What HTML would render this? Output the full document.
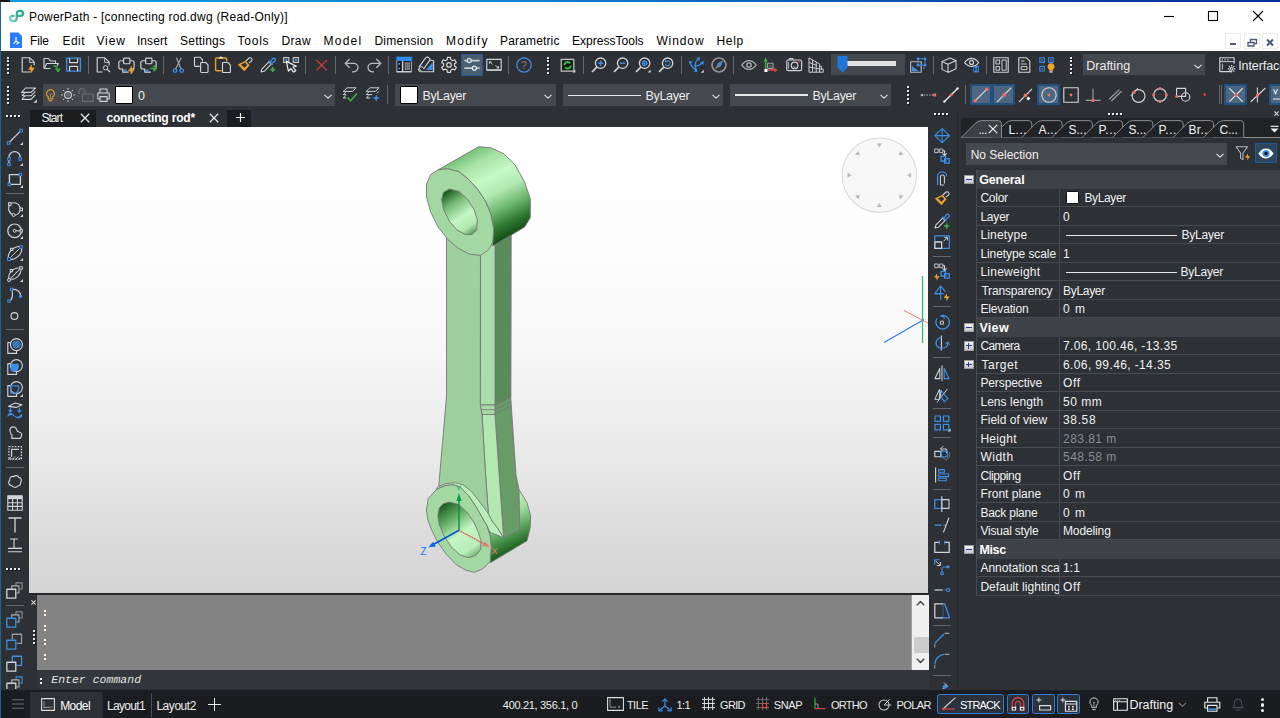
<!DOCTYPE html>
<html lang="en"><head><meta charset="utf-8"><title>PowerPath - [connecting rod.dwg (Read-Only)]</title>
<style>
html,body{margin:0;padding:0;background:#2d3035;}
body{width:1280px;height:718px;overflow:hidden;position:relative;font-family:"Liberation Sans",sans-serif;}
.r{position:absolute;display:block;}
.t{position:absolute;white-space:pre;display:block;}
svg{overflow:visible;}
</style></head>
<body>
<div class="r" style="left:0px;top:0px;width:1280px;height:51px;background:#fff;"></div>
<div class="r" style="left:0px;top:0px;width:1280px;height:1.5px;background:linear-gradient(90deg,#0a9ee0 0%,#0a84d0 40%,#0a3fa8 80%,#0a2e98 100%);"></div>
<div class="r" style="left:0px;top:0px;width:10px;height:1.5px;background:#151515;"></div>
<div class="r" style="left:0px;top:1.5px;width:1.4px;height:716.5px;background:#16688c;"></div>
<svg class="r" style="left:0px;top:0px;" width="32" height="28" viewBox="0 0 32 28"><defs><linearGradient id="lg" gradientUnits="userSpaceOnUse" x1="9" y1="22" x2="24" y2="10"><stop offset="0" stop-color="#8fdccb"/><stop offset="0.5" stop-color="#3bb49a"/><stop offset="1" stop-color="#1ea58a"/></linearGradient></defs>
<path d="M13.6 15.9C11.5 15.4 10.1 16.7 10.1 18.5C10.1 20.3 11.6 21.2 13.3 21.2C15.3 21.2 16.8 19.8 16.8 17.8V13.5C16.8 11.8 18.2 10.9 20 10.9C21.8 10.9 23 11.9 23 13.4C23 14.9 21.8 15.8 20.2 15.8H17.6" fill="none" stroke="url(#lg)" stroke-width="2.3" stroke-linecap="round"/></svg>
<span class="t" style="left:28.90px;top:11.24px;font-size:12px;line-height:12px;color:#000;letter-spacing:0.231px;">PowerPath - [connecting rod.dwg (Read-Only)]</span>
<svg class="r" style="left:1160px;top:8px;" width="110" height="16" viewBox="0 0 110 16"><path d="M4 8.5h10" stroke="#000" stroke-width="1.1"/><rect x="48.5" y="3.5" width="9" height="9" fill="none" stroke="#000" stroke-width="1.1"/><path d="M93 3l10 10M103 3l-10 10" stroke="#000" stroke-width="1.1"/></svg>
<svg class="r" style="left:10px;top:32px;" width="12" height="16" viewBox="0 0 12 16"><path d="M0 0.5h8.5l3.5 3.5v12H0z" fill="#2b7bff"/><path d="M6 5v4.2M6 9.2l-2.6 2.6M6 9.2l2.6 1.4l-2 1.6" stroke="#fff" stroke-width="1.2" fill="none"/></svg>
<span class="t" style="left:30.00px;top:35.34px;font-size:12px;line-height:12px;color:#000;letter-spacing:-0.145px;">File</span>
<span class="t" style="left:62.40px;top:35.34px;font-size:12px;line-height:12px;color:#000;letter-spacing:0.507px;">Edit</span>
<span class="t" style="left:96.40px;top:35.34px;font-size:12px;line-height:12px;color:#000;letter-spacing:0.902px;">View</span>
<span class="t" style="left:136.90px;top:35.34px;font-size:12px;line-height:12px;color:#000;letter-spacing:0.098px;">Insert</span>
<span class="t" style="left:180.10px;top:35.34px;font-size:12px;line-height:12px;color:#000;letter-spacing:0.206px;">Settings</span>
<span class="t" style="left:237.60px;top:35.34px;font-size:12px;line-height:12px;color:#000;letter-spacing:0.747px;">Tools</span>
<span class="t" style="left:281.40px;top:35.34px;font-size:12px;line-height:12px;color:#000;letter-spacing:0.399px;">Draw</span>
<span class="t" style="left:323.60px;top:35.34px;font-size:12px;line-height:12px;color:#000;letter-spacing:1.229px;">Model</span>
<span class="t" style="left:374.40px;top:35.34px;font-size:12px;line-height:12px;color:#000;letter-spacing:0.264px;">Dimension</span>
<span class="t" style="left:446.10px;top:35.34px;font-size:12px;line-height:12px;color:#000;letter-spacing:1.191px;">Modify</span>
<span class="t" style="left:500.10px;top:35.34px;font-size:12px;line-height:12px;color:#000;letter-spacing:0.143px;">Parametric</span>
<span class="t" style="left:571.90px;top:35.34px;font-size:12px;line-height:12px;color:#000;letter-spacing:0.031px;">ExpressTools</span>
<span class="t" style="left:656.40px;top:35.34px;font-size:12px;line-height:12px;color:#000;letter-spacing:0.904px;">Window</span>
<span class="t" style="left:716.40px;top:35.34px;font-size:12px;line-height:12px;color:#000;letter-spacing:0.707px;">Help</span>
<div class="r" style="left:1225px;top:33px;width:16px;height:16px;background:#fff;border:1px solid #ececec;box-sizing:border-box;"></div>
<div class="r" style="left:1244px;top:33px;width:16px;height:16px;background:#fff;border:1px solid #ececec;box-sizing:border-box;"></div>
<div class="r" style="left:1262px;top:33px;width:16px;height:16px;background:#fff;border:1px solid #ececec;box-sizing:border-box;"></div>
<svg class="r" style="left:1225px;top:33px;" width="54" height="16" viewBox="0 0 54 16"><path d="M5 11h6" stroke="#4a5a78" stroke-width="2"/>
<path d="M23 9.5h6v3.5h-6z M25.5 9V6.5h6v4H29" fill="none" stroke="#4a5a78" stroke-width="1.3"/>
<path d="M42 6.5l6 6M48 6.5l-6 6" stroke="#4a5a78" stroke-width="2"/></svg>
<div class="r" style="left:29px;top:126.5px;width:899px;height:466px;background:linear-gradient(180deg,#ffffff 0%,#fdfdfd 28%,#f7f7f7 48%,#ececec 66%,#dedede 85%,#d3d3d3 100%);"></div>
<svg class="r" style="left:0;top:0" width="1280" height="718" viewBox="0 0 1280 718"><defs>
<linearGradient id="cs1" gradientUnits="userSpaceOnUse" x1="478" y1="150" x2="520" y2="232"><stop offset="0" stop-color="#7ec67e"/><stop offset="0.12" stop-color="#a6e2a6"/><stop offset="0.32" stop-color="#c5f9c5"/><stop offset="0.5" stop-color="#b2eab2"/><stop offset="0.68" stop-color="#6fb870"/><stop offset="0.85" stop-color="#2f7a31"/><stop offset="1" stop-color="#0f4a12"/></linearGradient>
<linearGradient id="cs2" gradientUnits="userSpaceOnUse" x1="488" y1="474" x2="526" y2="552"><stop offset="0" stop-color="#86cc86"/><stop offset="0.15" stop-color="#aee6ae"/><stop offset="0.35" stop-color="#c2f6c2"/><stop offset="0.52" stop-color="#a2dea2"/><stop offset="0.7" stop-color="#5ea860"/><stop offset="0.86" stop-color="#2a722c"/><stop offset="1" stop-color="#0f4612"/></linearGradient>
<linearGradient id="h1" gradientUnits="userSpaceOnUse" x1="447" y1="192" x2="474" y2="232"><stop offset="0" stop-color="#1f5d22"/><stop offset="0.25" stop-color="#6fb570"/><stop offset="0.6" stop-color="#c4f7c4"/><stop offset="0.85" stop-color="#b2e8b2"/><stop offset="1" stop-color="#5ea05f"/></linearGradient>
<linearGradient id="h2" gradientUnits="userSpaceOnUse" x1="443" y1="505" x2="478" y2="555"><stop offset="0" stop-color="#1f5d22"/><stop offset="0.25" stop-color="#5ea860"/><stop offset="0.55" stop-color="#c4f7c4"/><stop offset="0.85" stop-color="#b8ecb8"/><stop offset="1" stop-color="#6aac6b"/></linearGradient>
</defs><polygon points="470.0,484.0 519.0,489.6 527.0,502.8 530.7,516.0 530.2,527.7 527.0,540.8 490.2,562.8 491.2,546.7 490.2,536.4 486.8,525.5 481.7,516.7 475.8,506.5" fill="url(#cs2)" stroke="#777" stroke-width="0.9" stroke-linejoin="round"/><polygon points="495.0,236.0 511.0,227.0 510.7,397.0 516.0,475.0 519.0,489.6 519.7,530.0 503.6,538.0 499.2,475.0 495.0,414.0 495.0,405.0" fill="#679b67" stroke="#777" stroke-width="0.9" stroke-linejoin="round"/><polygon points="495.0,236.0 511.0,227.0 510.7,397.0 495.0,405.0" fill="#5a8c5b" stroke="#777" stroke-width="0.9" stroke-linejoin="round"/><path d="M495 405L510.7 397M495 409.5L510.7 401.5M495 414L510.7 406" fill="none" stroke="#777" stroke-width="0.8"/><polygon points="480.5,250.0 495.0,240.0 495.0,405.0 480.3,405.0" fill="#abdfaa" stroke="#777" stroke-width="0.9" stroke-linejoin="round"/><polygon points="480.3,405.0 495.0,405.0 495.0,414.5 482.0,414.5" fill="#a6dba5" stroke="#777" stroke-width="0.9" stroke-linejoin="round"/><path d="M480.5 409.7H495" stroke="#777" stroke-width="0.8"/><polygon points="482.0,414.5 495.0,414.5 499.2,475.0 503.6,538.0 497.5,528.0 492.0,521.0 488.3,513.5 485.6,475.0" fill="#b3e8b2" stroke="#777" stroke-width="0.9" stroke-linejoin="round"/><polygon points="446.5,236.0 480.5,252.0 480.3,405.0 482.0,414.5 485.6,475.0 488.3,513.5 470.0,520.0 438.7,487.0 446.6,395.0" fill="#9dd09c" stroke="#777" stroke-width="0.9" stroke-linejoin="round"/><polygon points="437.0,487.5 446.0,483.5 455.5,482.8 463.5,485.0 472.5,492.5 481.0,503.5 488.3,513.5 492.0,521.0 497.5,528.0 503.6,538.0 496.0,534.5 490.0,532.5 486.8,525.5 481.7,516.7 475.8,506.5 468.5,495.5 460.5,487.4 453.9,484.9 445.1,485.5 436.3,489.6" fill="#b9eeb9" stroke="#777" stroke-width="0.9" stroke-linejoin="round"/><polygon points="438.2,169.8 478.6,146.7 490.8,147.8 504.0,153.8 515.2,165.1 524.6,182.0 530.3,198.9 530.3,217.7 524.6,227.1 492.7,245.9 493.6,229.0 490.8,213.9 485.2,200.8 477.7,189.5 468.3,179.2 458.9,171.6 447.6,168.8" fill="url(#cs1)" stroke="#777" stroke-width="0.9" stroke-linejoin="round"/><polygon points="447.6,168.8 458.9,171.6 468.3,179.2 477.7,189.5 485.2,200.8 490.8,213.9 493.6,229.0 492.7,242.1 488.9,249.6 480.5,255.3 470.1,254.3 458.9,248.7 447.6,239.3 438.2,227.1 430.7,212.1 426.5,197.0 426.5,183.9 430.7,174.5 438.2,169.8" fill="#a3d8a2" stroke="#777" stroke-width="0.9" stroke-linejoin="round"/><polygon points="449.5,189.1 458.9,191.4 467.3,198.9 473.9,209.2 477.3,219.6 476.7,229.9 472.0,234.6 465.4,234.6 457.0,229.9 449.5,221.4 443.8,210.2 441.6,199.8 443.5,192.3" fill="url(#h1)" stroke="#777" stroke-width="0.9" stroke-linejoin="round"/><polygon points="453.9,484.9 460.5,487.4 468.5,495.5 475.8,506.5 481.7,516.7 486.8,525.5 490.2,536.4 491.2,546.7 490.2,561.3 483.1,568.6 474.4,572.3 465.6,570.1 456.8,565.0 446.6,554.7 437.8,542.3 431.2,529.1 427.6,518.9 426.4,510.1 428.3,498.4 436.3,489.6 445.1,485.5" fill="#a3d8a2" stroke="#777" stroke-width="0.9" stroke-linejoin="round"/><polygon points="449.5,502.1 458.3,504.3 467.1,512.3 473.6,521.8 478.0,531.3 481.0,540.8 480.7,549.6 475.8,555.5 468.5,557.7 459.7,554.7 451.0,546.7 443.6,535.0 439.3,524.7 437.8,516.0 439.3,507.9 443.6,503.5" fill="url(#h2)" stroke="#777" stroke-width="0.9" stroke-linejoin="round"/><path d="M459 530.3V497" stroke="#0a8a4a" stroke-width="1.4"/><path d="M459 493l-2.6 8h5.2z" fill="#0a9a50"/><path d="M459 530.3L487 545.5" stroke="#e05a5a" stroke-width="1.4" stroke-dasharray="1.5 0.6"/><path d="M490 547l-7.6-1.2l2.4-4.4z" fill="#f07070"/><path d="M459 530.3L432.5 545" stroke="#0a50d8" stroke-width="1.6"/><path d="M428.5 547.2l4.5-5.4l3 4.6z" fill="#0a6af0"/><text x="456" y="491" font-size="8" fill="#18b070" font-family="Liberation Sans,sans-serif">Y</text><text x="491.5" y="554" font-size="9" fill="#e87a6a" font-family="Liberation Sans,sans-serif">X</text><text x="420.5" y="554.5" font-size="10" fill="#1a7af0" font-family="Liberation Sans,sans-serif">Z</text><circle cx="879.3" cy="175.2" r="37.2" fill="rgba(0,0,0,0.028)" stroke="#dadada" stroke-width="1.1"/><path d="M-2.6 -1.8H2.6L0 2.2Z" fill="#b8b8b8" transform="translate(879.3,145.2) rotate(0)"/><path d="M-2.6 -1.8H2.6L0 2.2Z" fill="#b8b8b8" transform="translate(900.5,154.0) rotate(45)"/><path d="M-2.6 -1.8H2.6L0 2.2Z" fill="#b8b8b8" transform="translate(909.3,175.2) rotate(90)"/><path d="M-2.6 -1.8H2.6L0 2.2Z" fill="#b8b8b8" transform="translate(900.5,196.4) rotate(135)"/><path d="M-2.6 -1.8H2.6L0 2.2Z" fill="#b8b8b8" transform="translate(879.3,205.2) rotate(180)"/><path d="M-2.6 -1.8H2.6L0 2.2Z" fill="#b8b8b8" transform="translate(858.1,196.4) rotate(225)"/><path d="M-2.6 -1.8H2.6L0 2.2Z" fill="#b8b8b8" transform="translate(849.3,175.2) rotate(270)"/><path d="M-2.6 -1.8H2.6L0 2.2Z" fill="#b8b8b8" transform="translate(858.1,154.0) rotate(315)"/><path d="M922.5 276V343" stroke="#20c060" stroke-width="1.2"/><path d="M884 342.5L924 319.5" stroke="#2a7ae8" stroke-width="1.2"/><path d="M904 310.5L928 323" stroke="#f06a6a" stroke-width="0.9"/></svg>
<div class="r" style="left:7px;top:56.5px;width:2px;height:2px;background:#e4e4e4;box-shadow:1px 1px 0 #17191c;"></div><div class="r" style="left:7px;top:60.4px;width:2px;height:2px;background:#e4e4e4;box-shadow:1px 1px 0 #17191c;"></div><div class="r" style="left:7px;top:64.3px;width:2px;height:2px;background:#e4e4e4;box-shadow:1px 1px 0 #17191c;"></div><div class="r" style="left:7px;top:68.2px;width:2px;height:2px;background:#e4e4e4;box-shadow:1px 1px 0 #17191c;"></div><div class="r" style="left:7px;top:72.1px;width:2px;height:2px;background:#e4e4e4;box-shadow:1px 1px 0 #17191c;"></div>
<svg class="r" style="left:21px;top:57px;" width="16" height="16" viewBox="0 0 16 16"><path d="M9.5 15H1.2V0.8h7.6l4.4 4.4v3" fill="none" stroke="#d2d4d8" stroke-width="1.14" stroke-linejoin="round"/><path d="M8.6 1v4.4h4.4" fill="none" stroke="#d2d4d8" stroke-width="0.88" stroke-linejoin="round"/><path d="M7.5 12.5l3-4.6l0.2 3.2l2.6-0.2l-3.2 4.8l-0.2-3.2z" fill="#eaa22f" stroke="#eaa22f" stroke-width="0.6"/></svg>
<svg class="r" style="left:43px;top:57px;" width="16" height="16" viewBox="0 0 16 16"><path d="M1 11.5V1.5h4.5l2 2.5h5v2.5" fill="none" stroke="#d2d4d8" stroke-width="1.14" stroke-linejoin="round"/><path d="M1.2 11.5l2.5-5h11.6l-1.2 2.4M1 11.5h6.5" fill="none" stroke="#d2d4d8" stroke-width="1.14" stroke-linejoin="round"/><path d="M10.5 9c3 0 4.5 1.5 4.5 5M12.4 11.6l2.6 3l2.4-3" fill="none" stroke="#3cb043" stroke-width="1.32" stroke-linejoin="round"/></svg>
<svg class="r" style="left:65.5px;top:57px;" width="16" height="16" viewBox="0 0 16 16"><path d="M0.8 1.2h13.6v13H0.8z" fill="none" stroke="#3d8ee6" stroke-width="1.32" stroke-linejoin="round"/><path d="M3.6 1.2v4.4h8V1.2M3.6 14v-4.6h8V14" fill="none" stroke="#d2d4d8" stroke-width="1.14" stroke-linejoin="round"/></svg>
<div class="r" style="left:88px;top:56px;width:1px;height:18px;background:#63666b;"></div>
<svg class="r" style="left:96px;top:57px;" width="16" height="16" viewBox="0 0 16 16"><path d="M6.5 15H1.2V0.8h7.6l4.4 4.4v3" fill="none" stroke="#d2d4d8" stroke-width="1.14" stroke-linejoin="round"/><path d="M8.6 1v4.4h4.4" fill="none" stroke="#d2d4d8" stroke-width="0.88" stroke-linejoin="round"/><circle cx="9.6" cy="10.8" r="2.2" fill="none" stroke="#d2d4d8" stroke-width="0.97" stroke-linejoin="round"/><path d="M11.2 12.4l2.8 2.6" fill="none" stroke="#d2d4d8" stroke-width="1.23" stroke-linejoin="round"/></svg>
<svg class="r" style="left:117.5px;top:57px;" width="16" height="16" viewBox="0 0 16 16"><rect x="5.6" y="1.1" width="6.3" height="5.7" rx="0.8" fill="none" stroke="#d2d4d8" stroke-width="1.14" stroke-linejoin="round"/><path d="M5.6 3.8H2.8a2 2 0 0 0-2 2v4.2a2 2 0 0 0 2 2h1.9M11.9 3.8h2.2a2 2 0 0 1 2 2v4.2a2 2 0 0 1-2 2h-1M4.7 11.4v3.7h6" fill="none" stroke="#d2d4d8" stroke-width="1.14" stroke-linejoin="round"/><path d="M5.4 12.4h3.2v2.2H5.4z" fill="#3d8ee6"/><path d="M10.4 14l3-4.6l0.2 3.2l2.6-0.2l-3.2 4.8l-0.2-3.2z" fill="#eaa22f" stroke="#eaa22f" stroke-width="0.6"/></svg>
<svg class="r" style="left:139.5px;top:57px;" width="16" height="16" viewBox="0 0 16 16"><rect x="5.6" y="1.1" width="6.3" height="5.7" rx="0.8" fill="none" stroke="#d2d4d8" stroke-width="1.14" stroke-linejoin="round"/><path d="M5.6 3.8H2.8a2 2 0 0 0-2 2v4.2a2 2 0 0 0 2 2h1.9M11.9 3.8h2.2a2 2 0 0 1 2 2v4.2a2 2 0 0 1-2 2h-1M4.7 11.4v3.7h6" fill="none" stroke="#d2d4d8" stroke-width="1.14" stroke-linejoin="round"/><path d="M5.4 12.4h3.2v2.2H5.4z" fill="#3d8ee6"/><path d="M10 11.4h6M13.4 8.6l3 2.8l-3 2.8" fill="none" stroke="#3cb043" stroke-width="1.41" stroke-linejoin="round"/></svg>
<div class="r" style="left:162.5px;top:56px;width:1px;height:18px;background:#63666b;"></div>
<svg class="r" style="left:171px;top:57px;" width="16" height="16" viewBox="0 0 16 16"><path d="M5.5 0.7l4.5 11.3M10.3 0.7l-5.7 11.3" fill="none" stroke="#a8abb0" stroke-width="1.14" stroke-linejoin="round"/><circle cx="4.1" cy="13.6" r="1.8" fill="none" stroke="#3d8ee6" stroke-width="1.32" stroke-linejoin="round"/><circle cx="10.6" cy="13.6" r="1.8" fill="none" stroke="#3d8ee6" stroke-width="1.32" stroke-linejoin="round"/></svg>
<svg class="r" style="left:193.5px;top:57px;" width="16" height="16" viewBox="0 0 16 16"><path d="M5.8 9.4H1.4a0.9 0.9 0 0 1-0.9-0.9V1.1a0.9 0.9 0 0 1 0.9-0.9h4.6l2.4 2.4v1.8" fill="none" stroke="#d2d4d8" stroke-width="1.14" stroke-linejoin="round"/><path d="M7.5 5.5h4.2L14 7.8v6.8a0.9 0.9 0 0 1-0.9 0.9H7.5a0.9 0.9 0 0 1-0.9-0.9V6.4a0.9 0.9 0 0 1 0.9-0.9z" fill="none" stroke="#d2d4d8" stroke-width="1.14" stroke-linejoin="round"/></svg>
<svg class="r" style="left:214.5px;top:57px;" width="16" height="16" viewBox="0 0 16 16"><path d="M6.4 13.8H1.6a1 1 0 0 1-1-1V2a1 1 0 0 1 1-1h9a1 1 0 0 1 1 1v2.6" fill="none" stroke="#eaa22f" stroke-width="1.41" stroke-linejoin="round"/><path d="M4 1.6a2 2 0 0 1 4 0z" fill="#e8e8e8"/><path d="M8.4 5.5h4.4l2.6 2.6v6.5a0.9 0.9 0 0 1-0.9 0.9H8.4a0.9 0.9 0 0 1-0.9-0.9V6.4a0.9 0.9 0 0 1 0.9-0.9z" fill="none" stroke="#d2d4d8" stroke-width="1.14" stroke-linejoin="round"/></svg>
<svg class="r" style="left:237px;top:57px;" width="16" height="16" viewBox="0 0 16 16"><path d="M0.8 7.4l7.8-3.6l4 4.4l-5.2 6z" fill="#eaa22f"/><path d="M4 7.4l4-1.8l2.2 2.4l-2.8 2.8z" fill="#2d3035"/><path d="M8.8 4l3.4-3a1.4 1.4 0 0 1 2 0.2l0.6 0.8a1.4 1.4 0 0 1-0.2 1.9L12 6.2" fill="none" stroke="#d2d4d8" stroke-width="1.06" stroke-linejoin="round"/></svg>
<svg class="r" style="left:260px;top:57px;" width="16" height="16" viewBox="0 0 16 16"><path d="M1 15l1-3.2l7-7l2.4 2.4l-7 7z" fill="none" stroke="#d2d4d8" stroke-width="1.06" stroke-linejoin="round"/><path d="M8.4 3.6l4.2 4.2M10 5.4l2.6-3.6a1.6 1.6 0 0 1 2.4 2.2l-3.4 2.8" fill="none" stroke="#3d8ee6" stroke-width="1.32" stroke-linejoin="round"/><path d="M10.2 12.6h5M12.7 10.1v5" fill="none" stroke="#3cb043" stroke-width="1.58" stroke-linejoin="round"/></svg>
<svg class="r" style="left:282.5px;top:57px;" width="16" height="16" viewBox="0 0 16 16"><rect x="0.6" y="0.6" width="5.2" height="4.8" fill="none" stroke="#c8c8c8" stroke-width="1.06" stroke-linejoin="round"/><rect x="2.2" y="2" width="2" height="2" fill="#3d8ee6"/><rect x="10.2" y="0.6" width="5.2" height="4.8" fill="none" stroke="#c8c8c8" stroke-width="1.06" stroke-linejoin="round"/><rect x="11.8" y="2" width="2" height="2" fill="#3d8ee6"/><path d="M3.4 4.4l2 9.8l2.4-2.6l2.8 3.6l2.2-1.6l-2.8-3.6l3.4-0.8z" fill="#2d3035" stroke="#f0f0f0" stroke-width="1.2" stroke-linejoin="round"/></svg>
<div class="r" style="left:305px;top:56px;width:1px;height:18px;background:#63666b;"></div>
<svg class="r" style="left:313.5px;top:57px;" width="16" height="16" viewBox="0 0 16 16"><path d="M2.4 3l10.6 10.4M13 3L2.4 13.4" fill="none" stroke="#d63c3c" stroke-width="1.32" stroke-linejoin="round"/></svg>
<div class="r" style="left:335px;top:56px;width:1px;height:18px;background:#63666b;"></div>
<svg class="r" style="left:343.5px;top:57px;" width="16" height="16" viewBox="0 0 16 16"><path d="M5.6 2L1.2 6.4l4.4 4.4M1.5 6.4h8.3a4.2 4.2 0 0 1 0 8.4H8" fill="none" stroke="#b8bbc0" stroke-width="1.32" stroke-linejoin="round"/></svg>
<svg class="r" style="left:365.5px;top:57px;" width="16" height="16" viewBox="0 0 16 16"><path d="M10.4 2l4.4 4.4l-4.4 4.4M14.5 6.4H6.2a4.2 4.2 0 0 0 0 8.4H8" fill="none" stroke="#b8bbc0" stroke-width="1.32" stroke-linejoin="round"/></svg>
<div class="r" style="left:388px;top:56px;width:1px;height:18px;background:#63666b;"></div>
<svg class="r" style="left:395.5px;top:57px;" width="16" height="16" viewBox="0 0 16 16"><path d="M0.8 4h14.6v10.4H0.8z" fill="#101214"/><path d="M0.3 -0.3h15.6v4.4H0.3z" fill="#2f8cf0"/><path d="M0.8 4v10.8h14.6V4" fill="none" stroke="#b0b3b8" stroke-width="0.97" stroke-linejoin="round"/><path d="M0.6 14.7h15" fill="none" stroke="#c8cbd0" stroke-width="1.41" stroke-linejoin="round"/><path d="M6.6 4.2v10.4" fill="none" stroke="#d8d8d8" stroke-width="1.5" stroke-linejoin="round"/><circle cx="3.2" cy="6.9" r="1.05" fill="#2f9cf8"/><circle cx="3.2" cy="11.5" r="1.05" fill="#2f9cf8"/><path d="M8.6 5.2h5.6v8H8.6z" fill="#8a8d92"/><path d="M10.4 5.2v8M12.3 5.2v8M8.6 7.8h5.6M8.6 10.4h5.6" stroke="#4a4d52" stroke-width="0.5"/></svg>
<svg class="r" style="left:418px;top:57px;" width="16" height="16" viewBox="0 0 16 16"><path d="M8 12.9h6.7V5.2z" fill="#3d8ee6"/><path d="M0.8 10.4L7.6 0.9a2.6 2.6 0 0 1 4.4 2L5.6 12" fill="none" stroke="#d2d4d8" stroke-width="1.14" stroke-linejoin="round"/><path d="M12 3l3.6 0.8V14.8H3a2.4 2.4 0 0 1-2.2-3.4" fill="none" stroke="#d2d4d8" stroke-width="1.14" stroke-linejoin="round"/><path d="M5.4 11.4a2 2 0 1 0-2 2.2" fill="none" stroke="#d2d4d8" stroke-width="0.97" stroke-linejoin="round"/></svg>
<svg class="r" style="left:440.5px;top:57px;" width="16" height="16" viewBox="0 0 16 16"><path d="M6.24 2.58L6.47 0.35L9.53 0.35L9.76 2.58L11.72 3.72L13.77 2.80L15.30 5.45L13.48 6.77L13.48 9.03L15.30 10.35L13.77 13.00L11.72 12.08L9.76 13.22L9.53 15.45L6.47 15.45L6.24 13.22L4.28 12.08L2.23 13.00L0.70 10.35L2.52 9.03L2.52 6.77L0.70 5.45L2.23 2.80L4.28 3.72Z" fill="none" stroke="#d2d4d8" stroke-width="1.23" stroke-linejoin="round"/><circle cx="8" cy="7.9" r="2.3" fill="none" stroke="#d2d4d8" stroke-width="1.23" stroke-linejoin="round"/></svg>
<div class="r" style="left:460.5px;top:54px;width:22.5px;height:22px;background:#4a5e72;border:1px solid #2a5a8c;box-sizing:border-box;"></div>
<svg class="r" style="left:464px;top:57px;" width="16" height="16" viewBox="0 0 16 16"><path d="M0.4 3.6h3M7.2 3.6h8.4M0.4 11.2h8M12.6 11.2h3" fill="none" stroke="#c4ccd6" stroke-width="1.67" stroke-linejoin="round"/><circle cx="5.2" cy="3.6" r="2" fill="none" stroke="#e8ecf0" stroke-width="1.23" stroke-linejoin="round"/><circle cx="10.4" cy="11.2" r="2" fill="none" stroke="#e8ecf0" stroke-width="1.23" stroke-linejoin="round"/></svg>
<svg class="r" style="left:485.5px;top:57px;" width="16" height="16" viewBox="0 0 16 16"><path d="M0.8 2.4h14.4v10.8H0.8z" fill="none" stroke="#d2d4d8" stroke-width="1.14" stroke-linejoin="round"/><path d="M1 13h14" fill="none" stroke="#d2d4d8" stroke-width="1.41" stroke-linejoin="round"/><path d="M3.4 4.8l3.2 2.6M3.4 4.8h2.2M3.4 4.8v2M12.6 11l-3.2-2.6M12.6 11h-2.2M12.6 11V9" fill="none" stroke="#d2d4d8" stroke-width="0.88" stroke-linejoin="round"/></svg>
<div class="r" style="left:508px;top:56px;width:1px;height:18px;background:#63666b;"></div>
<svg class="r" style="left:515.5px;top:57px;" width="16" height="16" viewBox="0 0 16 16"><circle cx="8" cy="8" r="7.2" fill="none" stroke="#3d8ee6" stroke-width="1.32" stroke-linejoin="round"/><text x="8" y="12" font-size="10.5" fill="#7a7d82" text-anchor="middle" font-family="Liberation Sans,sans-serif">?</text></svg>
<div class="r" style="left:547px;top:56.5px;width:2px;height:2px;background:#e4e4e4;box-shadow:1px 1px 0 #17191c;"></div><div class="r" style="left:547px;top:60.4px;width:2px;height:2px;background:#e4e4e4;box-shadow:1px 1px 0 #17191c;"></div><div class="r" style="left:547px;top:64.3px;width:2px;height:2px;background:#e4e4e4;box-shadow:1px 1px 0 #17191c;"></div><div class="r" style="left:547px;top:68.2px;width:2px;height:2px;background:#e4e4e4;box-shadow:1px 1px 0 #17191c;"></div><div class="r" style="left:547px;top:72.1px;width:2px;height:2px;background:#e4e4e4;box-shadow:1px 1px 0 #17191c;"></div>
<svg class="r" style="left:559.5px;top:57px;" width="16" height="16" viewBox="0 0 16 16"><path d="M1.2 2.4h12.6v11.8H1.2z" fill="none" stroke="#c0c3c8" stroke-width="1.23" stroke-linejoin="round"/><path d="M2.6 3.8h9.8v9H2.6z" fill="#101214"/><path d="M4.4 8.2a3.2 3.2 0 0 1 5.8-1.8M10.8 8.4a3.2 3.2 0 0 1-5.8 1.8" fill="none" stroke="#2fc040" stroke-width="1.94" stroke-linejoin="round"/><path d="M15.4 15.4h-2.8l2.8-2.8z" fill="#d2d4d8"/></svg>
<div class="r" style="left:583px;top:56px;width:1px;height:18px;background:#63666b;"></div>
<svg class="r" style="left:590.5px;top:57px;" width="16" height="16" viewBox="0 0 16 16"><circle cx="9.6" cy="6.2" r="5.2" fill="none" stroke="#d2d4d8" stroke-width="1.32" stroke-linejoin="round"/><path d="M5.8 10.2L1 15" fill="none" stroke="#d2d4d8" stroke-width="1.76" stroke-linejoin="round"/><path d="M7 6.2h5.2M9.6 3.6v5.2" fill="none" stroke="#3d8ee6" stroke-width="1.41" stroke-linejoin="round"/></svg>
<svg class="r" style="left:612.5px;top:57px;" width="16" height="16" viewBox="0 0 16 16"><circle cx="9.6" cy="6.2" r="5.2" fill="none" stroke="#d2d4d8" stroke-width="1.32" stroke-linejoin="round"/><path d="M5.8 10.2L1 15" fill="none" stroke="#d2d4d8" stroke-width="1.76" stroke-linejoin="round"/><path d="M7 6.2h5.2" fill="none" stroke="#3d8ee6" stroke-width="1.41" stroke-linejoin="round"/></svg>
<svg class="r" style="left:634.5px;top:57px;" width="16" height="16" viewBox="0 0 16 16"><circle cx="9.6" cy="6.2" r="5.2" fill="none" stroke="#d2d4d8" stroke-width="1.32" stroke-linejoin="round"/><path d="M5.8 10.2L1 15" fill="none" stroke="#d2d4d8" stroke-width="1.76" stroke-linejoin="round"/><path d="M6.6 6.2h6M9.6 3.2v6" fill="none" stroke="#3d8ee6" stroke-width="1.06" stroke-linejoin="round"/><circle cx="9.6" cy="6.2" r="2.2" fill="none" stroke="#3d8ee6" stroke-width="1.06" stroke-linejoin="round"/><path d="M15.6 15.6h-3l3-3z" fill="#d2d4d8"/></svg>
<svg class="r" style="left:658px;top:57px;" width="16" height="16" viewBox="0 0 16 16"><circle cx="9.6" cy="6.2" r="5.2" fill="none" stroke="#d2d4d8" stroke-width="1.32" stroke-linejoin="round"/><path d="M5.8 10.2L1 15" fill="none" stroke="#d2d4d8" stroke-width="1.76" stroke-linejoin="round"/><path d="M7.4 7a2.4 2.4 0 1 0 1-2.8M7.4 3v2h2" fill="none" stroke="#3d8ee6" stroke-width="1.06" stroke-linejoin="round"/></svg>
<div class="r" style="left:681px;top:56px;width:1px;height:18px;background:#63666b;"></div>
<svg class="r" style="left:688px;top:57px;" width="16" height="16" viewBox="0 0 16 16"><path d="M2.4 6.4Q4.6 11.6 8.4 13M10 2.2Q5.2 6.4 8.4 13M14 6.2Q9.4 10 6.2 8.6" fill="none" stroke="#3d8ee6" stroke-width="1.32" stroke-linejoin="round"/><path d="M0.6 4l4 0.6l-2.6 3.2zM8.4 0.8l3.6-0.6l-0.6 3.8zM15.8 4l-0.4 4l-3.4-2.6zM9.6 15.2l-3.8-0.8l2.8-2.8z" fill="#3d8ee6"/><path d="M15.8 15.8h-3l3-3z" fill="#d2d4d8"/></svg>
<svg class="r" style="left:711px;top:57px;" width="16" height="16" viewBox="0 0 16 16"><circle cx="8" cy="8" r="7" fill="none" stroke="#8e9196" stroke-width="1.67" stroke-linejoin="round"/><path d="M12 3.6L9.4 9.6L4 12.2L6.8 6.4z" fill="#7a7d82"/><path d="M12.2 3.4L9.6 9.8L6.2 6.4z" fill="#3d8ee6"/></svg>
<div class="r" style="left:733px;top:56px;width:1px;height:18px;background:#63666b;"></div>
<svg class="r" style="left:740.5px;top:57px;" width="16" height="16" viewBox="0 0 16 16"><path d="M0.8 8C3 4.8 5.4 3.6 8 3.6S13 4.8 15.2 8C13 11.2 10.6 12.4 8 12.4S3 11.2 0.8 8z" fill="none" stroke="#b0b3b8" stroke-width="1.32" stroke-linejoin="round"/><circle cx="8" cy="8" r="2.2" fill="none" stroke="#b0b3b8" stroke-width="1.32" stroke-linejoin="round"/></svg>
<svg class="r" style="left:763px;top:57px;" width="16" height="16" viewBox="0 0 16 16"><path d="M2.6 12.6V3.4" fill="none" stroke="#3cb043" stroke-width="1.58" stroke-linejoin="round"/><path d="M2.6 0.6L0.4 4.4h4.4z" fill="#3cb043"/><path d="M3 13h8.6" fill="none" stroke="#e04545" stroke-width="1.58" stroke-linejoin="round"/><path d="M14.8 13l-3.6-2.2v4.4z" fill="#e04545"/><path d="M4.6 6.2h5.4v5.2H4.6z" fill="none" stroke="#9a9da2" stroke-width="1.14" stroke-linejoin="round"/><path d="M6.2 7.8h2.2v2H6.2z" fill="#606368"/><path d="M1.4 12h3v3h-3z" fill="#fff"/></svg>
<svg class="r" style="left:785.5px;top:57px;" width="16" height="16" viewBox="0 0 16 16"><rect x="0.8" y="3" width="14.8" height="10.6" rx="1.4" fill="none" stroke="#d2d4d8" stroke-width="1.14" stroke-linejoin="round"/><path d="M3.4 3V1.6h3.6V3" fill="none" stroke="#d2d4d8" stroke-width="1.06" stroke-linejoin="round"/><circle cx="8.6" cy="8.4" r="3.3" fill="none" stroke="#d2d4d8" stroke-width="1.14" stroke-linejoin="round"/><path d="M7 9.2a1.8 1.8 0 0 0 2.6 0.8" fill="none" stroke="#d2d4d8" stroke-width="0.88" stroke-linejoin="round"/><path d="M12.2 4.2h2v1.4h-2z" fill="#e04545"/><path d="M2.6 5v6.8" fill="none" stroke="#d2d4d8" stroke-width="0.79" stroke-linejoin="round"/></svg>
<svg class="r" style="left:808px;top:57px;" width="16" height="16" viewBox="0 0 16 16"><path d="M1 0.8v14.4h14.6M1 0.8L11.6 7v8M1 5.4l8 3.2M1 10l13 2.4M4.6 3v12M8.2 5v10" fill="none" stroke="#d2d4d8" stroke-width="0.97" stroke-linejoin="round"/><path d="M11.6 9.4h2v2.6h1.6v3" fill="none" stroke="#d2d4d8" stroke-width="0.88" stroke-linejoin="round"/></svg>
<svg class="r" style="left:910px;top:57px;" width="16" height="16" viewBox="0 0 16 16"><path d="M0.6 4.8h10.6v10.4H0.6z" fill="none" stroke="#b8bbc0" stroke-width="1.14" stroke-linejoin="round"/><path d="M1.8 14.2V8.6l7 5.6z" fill="#3d8ee6"/><path d="M8 1.8h7v6.4H8z" fill="none" stroke="#3d8ee6" stroke-width="1.06" stroke-linejoin="round"/><circle cx="8" cy="1.8" r="1.4" fill="#3d8ee6"/><circle cx="15" cy="1.8" r="1.4" fill="#3d8ee6"/><circle cx="8" cy="8.2" r="1.4" fill="#3d8ee6"/><circle cx="15" cy="8.2" r="1.4" fill="#3d8ee6"/><path d="M13 10.4l1.4 1.6" fill="none" stroke="#3d8ee6" stroke-width="1.06" stroke-linejoin="round"/></svg>
<div class="r" style="left:933.3px;top:56px;width:1px;height:18px;background:#63666b;"></div>
<svg class="r" style="left:940.5px;top:57px;" width="16" height="16" viewBox="0 0 16 16"><path d="M1 4.4L9 1l6 2.6v8.2L7 15.4L1 12.4zM1 4.4l6 2.8L15 3.6M7 7.2v8.2" fill="none" stroke="#d2d4d8" stroke-width="1.06" stroke-linejoin="round"/></svg>
<svg class="r" style="left:963.5px;top:57px;" width="16" height="16" viewBox="0 0 16 16"><path d="M0.6 5.6C3 2.4 5.2 1.4 7.6 1.4s4.6 1 7 4.2C13 8 11 9.4 7.6 9.4 5.4 9.4 3 8.4 0.6 5.6z" fill="none" stroke="#d2d4d8" stroke-width="1.06" stroke-linejoin="round"/><circle cx="7.6" cy="5.4" r="2" fill="none" stroke="#d2d4d8" stroke-width="1.14" stroke-linejoin="round"/><path d="M9.4 9h5.6v6.4H9.4z" fill="#3d8ee6"/><path d="M10.6 10.2v4M13.8 10.2v4M10.6 12.2h3.2" stroke="#1a2a44" stroke-width="0.9"/></svg>
<div class="r" style="left:986px;top:56px;width:1px;height:18px;background:#63666b;"></div>
<svg class="r" style="left:993px;top:57px;" width="16" height="16" viewBox="0 0 16 16"><path d="M0.8 0.8h14.4v14.4H0.8z" fill="none" stroke="#d2d4d8" stroke-width="1.14" stroke-linejoin="round"/><path d="M3 3h3.6v4H3zM3 9.6h3.6v3.6H3zM9 3h4.2v10.2H9z" fill="none" stroke="#d2d4d8" stroke-width="0.97" stroke-linejoin="round"/></svg>
<svg class="r" style="left:1018px;top:57px;" width="16" height="16" viewBox="0 0 16 16"><path d="M0.8 0.8h7.6l3.4 3.4v11H0.8z" fill="none" stroke="#d2d4d8" stroke-width="1.14" stroke-linejoin="round"/><path d="M3 4h3.4M3 7h5.8M3.2 9.6h5.8v3H3.2z" fill="none" stroke="#d2d4d8" stroke-width="0.97" stroke-linejoin="round"/></svg>
<svg class="r" style="left:1038.5px;top:57px;" width="16" height="16" viewBox="0 0 16 16"><path d="M0.8 0.8h4.6v4.6H0.8zM0.8 9.4h4.6V14H0.8zM9.6 0.8h4.6v4.6H9.6z" fill="none" stroke="#3d8ee6" stroke-width="1.06" stroke-linejoin="round"/><path d="M2.2 3.1h1.8M3.1 2.2V4M2.2 11.7H4M3.1 10.8v1.8M11 3.1h1.8M11.9 2.2V4" fill="none" stroke="#3d8ee6" stroke-width="0.79" stroke-linejoin="round"/><path d="M12 6.2a3.4 3.4 0 0 1 2 6.2v1.4h-4v-1.4a3.4 3.4 0 0 1 2-6.2z" fill="#eaa22f"/><path d="M10.4 14.2h3.2v1.4h-3.2z" fill="#d2d4d8"/></svg>
<div class="r" style="left:1070px;top:56.5px;width:2px;height:2px;background:#e4e4e4;box-shadow:1px 1px 0 #17191c;"></div><div class="r" style="left:1070px;top:60.4px;width:2px;height:2px;background:#e4e4e4;box-shadow:1px 1px 0 #17191c;"></div><div class="r" style="left:1070px;top:64.3px;width:2px;height:2px;background:#e4e4e4;box-shadow:1px 1px 0 #17191c;"></div><div class="r" style="left:1070px;top:68.2px;width:2px;height:2px;background:#e4e4e4;box-shadow:1px 1px 0 #17191c;"></div><div class="r" style="left:1070px;top:72.1px;width:2px;height:2px;background:#e4e4e4;box-shadow:1px 1px 0 #17191c;"></div>
<svg class="r" style="left:1219px;top:57px;" width="16" height="16" viewBox="0 0 16 16"><path d="M12 14.6H0.8V0.8h14.4v6" fill="none" stroke="#d2d4d8" stroke-width="1.14" stroke-linejoin="round"/><path d="M0.8 4.6h14.4" fill="none" stroke="#d2d4d8" stroke-width="0.97" stroke-linejoin="round"/><path d="M2.6 2.7h1.4M5.4 2.7h1.4M8.2 2.7h1.4" fill="none" stroke="#d2d4d8" stroke-width="1.06" stroke-linejoin="round"/><path d="M3.4 6.6v6" fill="none" stroke="#d2d4d8" stroke-width="0.88" stroke-linejoin="round"/><circle cx="12.6" cy="11.8" r="1.3" fill="none" stroke="#d2d4d8" stroke-width="1.06" stroke-linejoin="round"/><path d="M12.6 8v1.6M12.6 14v1.6M8.8 11.8h1.6M14.8 11.8h1.6M9.9 9.1l1.1 1.1M14.2 13.4l1.1 1.1M9.9 14.5l1.1-1.1M14.2 10.2l1.1-1.1" fill="none" stroke="#d2d4d8" stroke-width="1.23" stroke-linejoin="round"/></svg>
<div class="r" style="left:830.5px;top:54px;width:74px;height:21px;background:#45484d;"></div>
<div class="r" style="left:847px;top:61px;width:49px;height:5px;background:#e2e2e2;"></div>
<svg class="r" style="left:837px;top:56px;" width="11" height="17" viewBox="0 0 11 17"><path d="M0.5 0h10v11.5L5.5 16.5L0.5 11.5z" fill="#1f78d8"/></svg>
<div class="r" style="left:1083px;top:54px;width:122px;height:21px;background:#45484d;"></div>
<span class="t" style="left:1086.17px;top:59.62px;font-size:12.5px;line-height:12.5px;color:#ececec;letter-spacing:0.026px;">Drafting</span>
<svg class="r" style="left:1193.5px;top:64px;" width="8" height="6" viewBox="0 0 8 6"><path d="M0.5 0.8l3.5 3.4l3.5-3.4" fill="none" stroke="#e0e0e0" stroke-width="1.14" stroke-linejoin="round"/></svg>
<span class="t" style="left:1238.17px;top:59.62px;font-size:12.5px;line-height:12.5px;color:#ececec;letter-spacing:-0.086px;">Interface</span>
<div class="r" style="left:7px;top:86.0px;width:2px;height:2px;background:#e4e4e4;box-shadow:1px 1px 0 #17191c;"></div><div class="r" style="left:7px;top:89.9px;width:2px;height:2px;background:#e4e4e4;box-shadow:1px 1px 0 #17191c;"></div><div class="r" style="left:7px;top:93.8px;width:2px;height:2px;background:#e4e4e4;box-shadow:1px 1px 0 #17191c;"></div><div class="r" style="left:7px;top:97.7px;width:2px;height:2px;background:#e4e4e4;box-shadow:1px 1px 0 #17191c;"></div><div class="r" style="left:7px;top:101.6px;width:2px;height:2px;background:#e4e4e4;box-shadow:1px 1px 0 #17191c;"></div>
<svg class="r" style="left:21px;top:87px;" width="16" height="16" viewBox="0 0 16 16"><path d="M4.5 1h10L10 5.4H0.6zM1 8.6l3-3M14.4 4.4L10 8.8H0.8M1 12l3-3M14.4 7.8L10 12.4H0.8" fill="none" stroke="#d2d4d8" stroke-width="1.06" stroke-linejoin="round"/><path d="M15.8 15.8h-3.4l3.4-3.4z" fill="#d2d4d8"/></svg>
<div class="r" style="left:43px;top:84px;width:292px;height:21.5px;background:#45484d;"></div>
<svg class="r" style="left:46px;top:89px;" width="9" height="13.2" viewBox="0 0 10 15"><path d="M5 0.8a4.4 4.4 0 0 1 2.6 8v2.6h-5.2V8.8A4.4 4.4 0 0 1 5 0.8zM3 13.4h4" fill="none" stroke="#eaa22f" stroke-width="1.14" stroke-linejoin="round"/><path d="M5 11V6.4M3.6 5l1.4 1.4L6.4 5" fill="none" stroke="#eaa22f" stroke-width="0.79" stroke-linejoin="round"/></svg>
<svg class="r" style="left:61px;top:88px;" width="14" height="14" viewBox="0 0 14 14"><circle cx="7" cy="7" r="3.4" fill="none" stroke="#d2d4d8" stroke-width="1.06" stroke-linejoin="round"/><circle cx="7" cy="7" r="2" fill="#6a6d72"/><path d="M7 0v1.6M7 12.4V14M0 7h1.6M12.4 7H14M2 2l1.1 1.1M10.9 10.9L12 12M2 12l1.1-1.1M10.9 3.1L12 2" fill="none" stroke="#d2d4d8" stroke-width="0.97" stroke-linejoin="round"/></svg>
<svg class="r" style="left:77.5px;top:87px;" width="16" height="16" viewBox="0 0 16 16"><path d="M4.6 7h10.6v7.4H4.6z" fill="none" stroke="#6d7075" stroke-width="1.06" stroke-linejoin="round"/><path d="M1 7V4.6a3 3 0 0 1 6 0V7" fill="none" stroke="#6d7075" stroke-width="1.06" stroke-linejoin="round"/><path d="M9.6 10h0.8v1.6h-0.8z" fill="#6d7075"/></svg>
<svg class="r" style="left:96.5px;top:88px;" width="13" height="14" viewBox="0 0 13 14"><path d="M3 4.6V1h7v3.6M3 11H0.8V5h11.4v6H10M3 8.6h7v4.8H3z" fill="none" stroke="#d2d4d8" stroke-width="1.14" stroke-linejoin="round"/></svg>
<div class="r" style="left:115px;top:86px;width:17.5px;height:17.5px;background:#fff;border:1px solid #000;box-sizing:border-box;border-radius:1px;"></div>
<span class="t" style="left:138.00px;top:89.62px;font-size:12.5px;line-height:12.5px;color:#ececec;">0</span>
<svg class="r" style="left:324px;top:94.3px;" width="8" height="6" viewBox="0 0 8 6"><path d="M0.5 0.8l3.5 3.4l3.5-3.4" fill="none" stroke="#e0e0e0" stroke-width="1.14" stroke-linejoin="round"/></svg>
<svg class="r" style="left:342px;top:87px;" width="16" height="16" viewBox="0 0 16 16"><path d="M5 0.8h9L10.6 4.4H1.2zM1.4 7.6l2.4-2.6M1.4 11l2.4-2.6M1.2 7.6h3M1.2 11h3" fill="none" stroke="#d2d4d8" stroke-width="0.97" stroke-linejoin="round"/><path d="M5.6 10.6l3 3.2L15 6.6" fill="none" stroke="#3cb043" stroke-width="1.58" stroke-linejoin="round"/></svg>
<svg class="r" style="left:364.5px;top:87px;" width="16" height="16" viewBox="0 0 16 16"><path d="M5 0.8h9L10.6 4.4H1.2zM1.4 7.6l2.4-2.6M1.4 11l2.4-2.6M1.2 7.6h6M1.2 11h4M13.6 4.4L12 6.4" fill="none" stroke="#d2d4d8" stroke-width="0.97" stroke-linejoin="round"/><path d="M11.2 7.2l1 2.8l2.8 1l-2.8 1l-1 2.8l-1-2.8l-2.8-1l2.8-1z" fill="#3d8ee6"/></svg>
<div class="r" style="left:387px;top:85px;width:1px;height:19px;background:#63666b;"></div>
<div class="r" style="left:395px;top:84px;width:161px;height:21.5px;background:#45484d;"></div>
<div class="r" style="left:399.5px;top:86px;width:18px;height:17.5px;background:#fff;border:1px solid #000;box-sizing:border-box;border-radius:1px;"></div>
<span class="t" style="left:422.38px;top:89.62px;font-size:12.5px;line-height:12.5px;color:#ececec;letter-spacing:-0.301px;">ByLayer</span>
<svg class="r" style="left:544px;top:94.3px;" width="8" height="6" viewBox="0 0 8 6"><path d="M0.5 0.8l3.5 3.4l3.5-3.4" fill="none" stroke="#e0e0e0" stroke-width="1.14" stroke-linejoin="round"/></svg>
<div class="r" style="left:562.5px;top:84px;width:160.5px;height:21.5px;background:#45484d;"></div>
<div class="r" style="left:568px;top:94.5px;width:73px;height:1px;background:#e8e8e8;"></div>
<span class="t" style="left:645.38px;top:89.62px;font-size:12.5px;line-height:12.5px;color:#ececec;letter-spacing:-0.268px;">ByLayer</span>
<svg class="r" style="left:712px;top:94.3px;" width="8" height="6" viewBox="0 0 8 6"><path d="M0.5 0.8l3.5 3.4l3.5-3.4" fill="none" stroke="#e0e0e0" stroke-width="1.14" stroke-linejoin="round"/></svg>
<div class="r" style="left:730px;top:84px;width:161px;height:21.5px;background:#45484d;"></div>
<div class="r" style="left:735px;top:94px;width:73px;height:2px;background:#e8e8e8;"></div>
<span class="t" style="left:812.38px;top:89.62px;font-size:12.5px;line-height:12.5px;color:#ececec;letter-spacing:-0.301px;">ByLayer</span>
<svg class="r" style="left:879.5px;top:94.3px;" width="8" height="6" viewBox="0 0 8 6"><path d="M0.5 0.8l3.5 3.4l3.5-3.4" fill="none" stroke="#e0e0e0" stroke-width="1.14" stroke-linejoin="round"/></svg>
<div class="r" style="left:906.5px;top:86.0px;width:2px;height:2px;background:#e4e4e4;box-shadow:1px 1px 0 #17191c;"></div><div class="r" style="left:906.5px;top:89.9px;width:2px;height:2px;background:#e4e4e4;box-shadow:1px 1px 0 #17191c;"></div><div class="r" style="left:906.5px;top:93.8px;width:2px;height:2px;background:#e4e4e4;box-shadow:1px 1px 0 #17191c;"></div><div class="r" style="left:906.5px;top:97.7px;width:2px;height:2px;background:#e4e4e4;box-shadow:1px 1px 0 #17191c;"></div><div class="r" style="left:906.5px;top:101.6px;width:2px;height:2px;background:#e4e4e4;box-shadow:1px 1px 0 #17191c;"></div>
<svg class="r" style="left:919.5px;top:87px;" width="16" height="16" viewBox="0 0 16 16"><path d="M1.4 8h12" stroke="#bbb" stroke-width="1.2" stroke-dasharray="1.4 1.2"/><path d="M0.4 8l1.6-1.6L3.6 8L2 9.6z" fill="#bbb"/><circle cx="14.6" cy="8" r="1.7" fill="#f06a6a"/></svg>
<svg class="r" style="left:942.5px;top:87px;" width="16" height="16" viewBox="0 0 16 16"><path d="M1.4 14.6L14.6 1.4" fill="none" stroke="#ececec" stroke-width="1.41" stroke-linejoin="round"/><circle cx="1.4" cy="14.6" r="1.2" fill="#ececec"/><circle cx="14.6" cy="1.4" r="1.2" fill="#ececec"/><circle cx="8" cy="8" r="1.6" fill="#f06a6a"/></svg>
<div class="r" style="left:965px;top:85px;width:1px;height:19px;background:#63666b;"></div>
<div class="r" style="left:969.8px;top:84px;width:22.6px;height:20.5px;background:#4d6780;border:2px solid #20517e;box-sizing:border-box;"></div>
<div class="r" style="left:992.4px;top:84px;width:22.6px;height:20.5px;background:#4d6780;border:2px solid #20517e;box-sizing:border-box;"></div>
<div class="r" style="left:1037px;top:84px;width:23px;height:20.5px;background:#4d6780;border:2px solid #20517e;box-sizing:border-box;"></div>
<svg class="r" style="left:973px;top:86.5px;" width="16" height="16" viewBox="0 0 16 16"><path d="M2 14L14 2" fill="none" stroke="#d2d4d8" stroke-width="1.14" stroke-linejoin="round"/><circle cx="2.2" cy="13.8" r="1.8" fill="#f06a6a"/><circle cx="13.8" cy="2.2" r="1.8" fill="#f06a6a"/></svg>
<svg class="r" style="left:995.7px;top:86.5px;" width="16" height="16" viewBox="0 0 16 16"><path d="M1 15L15 1" fill="none" stroke="#d2d4d8" stroke-width="1.14" stroke-linejoin="round"/><circle cx="8" cy="8" r="2" fill="#f06a6a"/></svg>
<svg class="r" style="left:1018px;top:86.5px;" width="16" height="16" viewBox="0 0 16 16"><path d="M1 15L14 2" fill="none" stroke="#d2d4d8" stroke-width="1.14" stroke-linejoin="round"/><circle cx="7.4" cy="8.4" r="1.8" fill="#f06a6a"/><path d="M10.4 9.4l2 2l-2 2l-2-2z" fill="#fff"/></svg>
<svg class="r" style="left:1040.5px;top:86.5px;" width="16" height="16" viewBox="0 0 16 16"><circle cx="8" cy="8" r="7.2" fill="none" stroke="#d2d4d8" stroke-width="1.14" stroke-linejoin="round"/><circle cx="8" cy="8" r="1.4" fill="#f06a6a"/></svg>
<svg class="r" style="left:1062.5px;top:86.5px;" width="16" height="16" viewBox="0 0 16 16"><path d="M0.8 0.8h14.4v14.4H0.8z" fill="none" stroke="#d2d4d8" stroke-width="1.14" stroke-linejoin="round"/><circle cx="8" cy="8" r="1.4" fill="#f06a6a"/></svg>
<svg class="r" style="left:1085px;top:86.5px;" width="16" height="16" viewBox="0 0 16 16"><path d="M8 1.4v12M0.6 13.4h15" fill="none" stroke="#9a9da2" stroke-width="1.14" stroke-linejoin="round"/><circle cx="8" cy="13.4" r="1.7" fill="#f06a6a"/></svg>
<svg class="r" style="left:1107.5px;top:86.5px;" width="16" height="16" viewBox="0 0 16 16"><path d="M1 12.4L11.4 2.6M3.4 14L13.6 4.2" fill="none" stroke="#a8abb0" stroke-width="1.06" stroke-linejoin="round"/></svg>
<svg class="r" style="left:1130px;top:86.5px;" width="16" height="16" viewBox="0 0 16 16"><circle cx="8.6" cy="9" r="6.4" fill="none" stroke="#d2d4d8" stroke-width="1.14" stroke-linejoin="round"/><path d="M0.6 9L8 1" fill="none" stroke="#d2d4d8" stroke-width="0.97" stroke-linejoin="round"/><circle cx="4" cy="5.2" r="1.7" fill="#f06a6a"/></svg>
<svg class="r" style="left:1152.2px;top:86.5px;" width="16" height="16" viewBox="0 0 16 16"><circle cx="8" cy="8" r="6.4" fill="none" stroke="#d2d4d8" stroke-width="1.14" stroke-linejoin="round"/><circle cx="8" cy="1.6" r="1.5" fill="#f06a6a"/><circle cx="8" cy="14.4" r="1.5" fill="#f06a6a"/><circle cx="1.6" cy="8" r="1.5" fill="#f06a6a"/><circle cx="14.4" cy="8" r="1.5" fill="#f06a6a"/></svg>
<svg class="r" style="left:1174.7px;top:86.5px;" width="16" height="16" viewBox="0 0 16 16"><path d="M1.6 1.4h9v8h-9z" fill="none" stroke="#d2d4d8" stroke-width="1.14" stroke-linejoin="round"/><circle cx="10.6" cy="10" r="4.2" fill="none" stroke="#d2d4d8" stroke-width="1.14" stroke-linejoin="round"/><circle cx="1.6" cy="9.4" r="1.5" fill="#f06a6a"/></svg>
<svg class="r" style="left:1203.4px;top:93.2px;" width="4" height="4" viewBox="0 0 4 4"><circle cx="1.6" cy="1.6" r="1.3" fill="#e04545"/></svg>
<div class="r" style="left:1219px;top:85px;width:1px;height:19px;background:#63666b;"></div>
<div class="r" style="left:1221px;top:85px;width:1px;height:19px;background:#63666b;"></div>
<div class="r" style="left:1224.2px;top:84px;width:22.8px;height:20.5px;background:#4d6780;border:2px solid #20517e;box-sizing:border-box;"></div>
<div class="r" style="left:1269px;top:84px;width:14px;height:20.5px;background:#4d6780;border:2px solid #20517e;box-sizing:border-box;"></div>
<svg class="r" style="left:1227.6px;top:86.5px;" width="16" height="16" viewBox="0 0 16 16"><path d="M1.4 1.4l13.2 13.2M14.6 1.4L1.4 14.6" fill="none" stroke="#ececec" stroke-width="1.14" stroke-linejoin="round"/><circle cx="8" cy="8" r="1.8" fill="#f06a6a"/></svg>
<svg class="r" style="left:1250px;top:86.5px;" width="16" height="16" viewBox="0 0 16 16"><path d="M7.4 0.4v15.2M0.6 15L15.4 1" fill="none" stroke="#d2d4d8" stroke-width="1.06" stroke-linejoin="round"/><circle cx="7.6" cy="8.2" r="1.6" fill="#f06a6a"/></svg>
<svg class="r" style="left:1273px;top:88px;" width="8" height="14" viewBox="0 0 8 14"><path d="M0.5 1l2 5l2-5M0 11h7" fill="none" stroke="#ececec" stroke-width="1.06" stroke-linejoin="round"/></svg>
<div class="r" style="left:6px;top:115px;width:2px;height:2px;background:#ececec;box-shadow:1px 1px 0 #15171a;"></div><div class="r" style="left:10px;top:115px;width:2px;height:2px;background:#ececec;box-shadow:1px 1px 0 #15171a;"></div><div class="r" style="left:14px;top:115px;width:2px;height:2px;background:#ececec;box-shadow:1px 1px 0 #15171a;"></div><div class="r" style="left:18px;top:115px;width:2px;height:2px;background:#ececec;box-shadow:1px 1px 0 #15171a;"></div>
<div class="r" style="left:30px;top:110px;width:66px;height:17px;background:#1b1d20;"></div>
<span class="t" style="left:41.40px;top:111.54px;font-size:12px;line-height:12px;color:#f0f0f0;letter-spacing:-0.935px;">Start</span>
<svg class="r" style="left:80px;top:112.5px;" width="10" height="10" viewBox="0 0 10 10"><path d="M0.8 0.8l8.4 8.4M9.2 0.8L0.8 9.2" fill="none" stroke="#e8e8e8" stroke-width="1.23" stroke-linejoin="round"/></svg>
<div class="r" style="left:96px;top:110px;width:130px;height:17px;background:#2d3035;"></div>
<span class="t" style="left:106.40px;top:111.54px;font-size:12px;line-height:12px;color:#ffffff;font-weight:bold;letter-spacing:-0.188px;">connecting rod*</span>
<svg class="r" style="left:209px;top:112.5px;" width="10" height="10" viewBox="0 0 10 10"><path d="M0.8 0.8l8.4 8.4M9.2 0.8L0.8 9.2" fill="none" stroke="#e8e8e8" stroke-width="1.23" stroke-linejoin="round"/></svg>
<div class="r" style="left:226.5px;top:110px;width:24.5px;height:17px;background:#1b1d20;"></div>
<svg class="r" style="left:235.5px;top:113px;" width="9" height="9" viewBox="0 0 9 9"><path d="M4.5 0v9M0 4.5h9" fill="none" stroke="#f0f0f0" stroke-width="1.14" stroke-linejoin="round"/></svg>
<div class="r" style="left:933.5px;top:112.5px;width:2px;height:2px;background:#ececec;box-shadow:1px 1px 0 #15171a;"></div><div class="r" style="left:937.5px;top:112.5px;width:2px;height:2px;background:#ececec;box-shadow:1px 1px 0 #15171a;"></div><div class="r" style="left:941.5px;top:112.5px;width:2px;height:2px;background:#ececec;box-shadow:1px 1px 0 #15171a;"></div><div class="r" style="left:945.5px;top:112.5px;width:2px;height:2px;background:#ececec;box-shadow:1px 1px 0 #15171a;"></div>
<div class="r" style="left:1108px;top:112.5px;width:2px;height:2px;background:#ececec;box-shadow:1px 1px 0 #15171a;"></div><div class="r" style="left:1112px;top:112.5px;width:2px;height:2px;background:#ececec;box-shadow:1px 1px 0 #15171a;"></div><div class="r" style="left:1116px;top:112.5px;width:2px;height:2px;background:#ececec;box-shadow:1px 1px 0 #15171a;"></div><div class="r" style="left:1120px;top:112.5px;width:2px;height:2px;background:#ececec;box-shadow:1px 1px 0 #15171a;"></div>
<svg class="r" style="left:1273.5px;top:110.5px;" width="5" height="5" viewBox="0 0 5 5"><path d="M0.4 0.4l4.2 4.2M4.6 0.4L0.4 4.6" fill="none" stroke="#d8d8d8" stroke-width="1.14" stroke-linejoin="round"/></svg>
<svg class="r" style="left:7px;top:129px;" width="16" height="16" viewBox="0 0 16 16"><path d="M1.6 14L14 1.6" fill="none" stroke="#d2d4d8" stroke-width="1.14" stroke-linejoin="round"/><rect x="0.30000000000000004" y="12.7" width="2.6" height="2.6" fill="#2d3035" stroke="#3d8ee6" stroke-width="1"/><rect x="12.7" y="0.30000000000000004" width="2.6" height="2.6" fill="#2d3035" stroke="#3d8ee6" stroke-width="1"/><path d="M16 16h-3l3-3z" fill="#d2d4d8"/></svg>
<svg class="r" style="left:7px;top:150px;" width="16" height="16" viewBox="0 0 16 16"><path d="M2 9V7.2a5.6 5.6 0 0 1 11.2 0V9M2 9v5" fill="none" stroke="#d2d4d8" stroke-width="1.23" stroke-linejoin="round"/><rect x="0.7" y="7.7" width="2.6" height="2.6" fill="#2d3035" stroke="#3d8ee6" stroke-width="1"/><rect x="11.899999999999999" y="7.7" width="2.6" height="2.6" fill="#2d3035" stroke="#3d8ee6" stroke-width="1"/><rect x="0.7" y="13.1" width="2.6" height="2.6" fill="#2d3035" stroke="#3d8ee6" stroke-width="1"/><path d="M16 16h-3l3-3z" fill="#d2d4d8"/></svg>
<svg class="r" style="left:7px;top:172px;" width="16" height="16" viewBox="0 0 16 16"><path d="M2.4 2.6h11v9.8h-11z" fill="none" stroke="#d2d4d8" stroke-width="1.32" stroke-linejoin="round"/><rect x="12.1" y="1.3" width="2.6" height="2.6" fill="#2d3035" stroke="#3d8ee6" stroke-width="1"/><rect x="1.0999999999999999" y="11.1" width="2.6" height="2.6" fill="#2d3035" stroke="#3d8ee6" stroke-width="1"/><path d="M16 16h-3l3-3z" fill="#d2d4d8"/></svg>
<div class="r" style="left:6px;top:193px;width:18px;height:1px;background:#63666b;"></div>
<svg class="r" style="left:7px;top:201px;" width="16" height="16" viewBox="0 0 16 16"><path d="M3 3.4A6.2 6.2 0 1 1 6.8 14.2A7 7 0 0 1 3 3.4" fill="none" stroke="#d2d4d8" stroke-width="1.14" stroke-linejoin="round"/><rect x="1.4999999999999998" y="1.7" width="2.6" height="2.6" fill="#2d3035" stroke="#d2d4d8" stroke-width="1"/><rect x="12.899999999999999" y="7.1000000000000005" width="2.6" height="2.6" fill="#2d3035" stroke="#d2d4d8" stroke-width="1"/><circle cx="6.6" cy="14" r="1.5" fill="#2d3035" stroke="#d2d4d8"/><path d="M16 16h-3l3-3z" fill="#d2d4d8"/></svg>
<svg class="r" style="left:7px;top:223px;" width="16" height="16" viewBox="0 0 16 16"><circle cx="7.6" cy="7.8" r="6.8" fill="none" stroke="#d2d4d8" stroke-width="1.23" stroke-linejoin="round"/><path d="M7.6 7.8h6" fill="none" stroke="#d2d4d8" stroke-width="1.06" stroke-linejoin="round"/><circle cx="7.6" cy="7.8" r="1.4" fill="#2d3035" stroke="#d2d4d8"/><rect x="13.0" y="6.6" width="2.4" height="2.4" fill="#2d3035" stroke="#d2d4d8" stroke-width="1"/><path d="M16 16h-3l3-3z" fill="#d2d4d8"/></svg>
<svg class="r" style="left:7px;top:244.5px;" width="16" height="16" viewBox="0 0 16 16"><ellipse cx="8" cy="8" rx="8" ry="4.6" transform="rotate(-42 8 8)" fill="none" stroke="#d2d4d8" stroke-width="1.06" stroke-linejoin="round"/><path d="M2 14L14 2" fill="none" stroke="#d2d4d8" stroke-width="0.88" stroke-linejoin="round"/><rect x="0.5" y="12.5" width="3.0" height="3.0" fill="#2d3035" stroke="#3d8ee6" stroke-width="1"/><rect x="12.7" y="0.7" width="2.6" height="2.6" fill="#2d3035" stroke="#3d8ee6" stroke-width="1"/><rect x="3.4999999999999996" y="3.3000000000000003" width="2.2" height="2.2" fill="#2d3035" stroke="#d2d4d8" stroke-width="1"/><path d="M16 16h-3l3-3z" fill="#d2d4d8"/></svg>
<svg class="r" style="left:7px;top:265.5px;" width="16" height="16" viewBox="0 0 16 16"><path d="M2 14L14 2M2 14C0.6 8 5 2.4 11.6 2M4.4 13.6C9 13 13.6 9.4 14 4.4" fill="none" stroke="#d2d4d8" stroke-width="1.06" stroke-linejoin="round"/><rect x="12.7" y="0.7" width="2.6" height="2.6" fill="#2d3035" stroke="#d2d4d8" stroke-width="1"/><rect x="3.3000000000000003" y="3.4999999999999996" width="2.2" height="2.2" fill="#2d3035" stroke="#d2d4d8" stroke-width="1"/><circle cx="2" cy="14" r="1.5" fill="#2d3035" stroke="#d2d4d8"/><path d="M16 16h-3l3-3z" fill="#d2d4d8"/></svg>
<svg class="r" style="left:7px;top:286.5px;" width="16" height="16" viewBox="0 0 16 16"><path d="M2 14.4C6 12 6.6 8.6 4.6 2.4C10 2 13.4 4 13.6 9" fill="none" stroke="#d2d4d8" stroke-width="1.14" stroke-linejoin="round"/><rect x="3.3999999999999995" y="1.2" width="2.4" height="2.4" fill="#2d3035" stroke="#3d8ee6" stroke-width="1"/><circle cx="13.6" cy="9.4" r="1.7" fill="#3d8ee6"/><rect x="0.8" y="12.8" width="2.4" height="2.4" fill="#2d3035" stroke="#3d8ee6" stroke-width="1"/></svg>
<svg class="r" style="left:7px;top:307.5px;" width="16" height="16" viewBox="0 0 16 16"><circle cx="7.4" cy="8" r="3.4" fill="none" stroke="#d2d4d8" stroke-width="1.14" stroke-linejoin="round"/></svg>
<div class="r" style="left:6px;top:329px;width:18px;height:1px;background:#63666b;"></div>
<svg class="r" style="left:7px;top:337.5px;" width="16" height="16" viewBox="0 0 16 16"><path d="M9.6 12.6v2.8H0.8V4.6h2.6" fill="none" stroke="#d2d4d8" stroke-width="1.14" stroke-linejoin="round"/><circle cx="9.4" cy="6.6" r="6" fill="none" stroke="#d2d4d8" stroke-width="1.14" stroke-linejoin="round"/><circle cx="9.4" cy="6.6" r="4.2" fill="#3d8ee6"/><path d="M6 9.4l6-6M7.4 10.6l5.8-5.8M5.4 7l4.4-4.4M9.6 11l3.6-3.6" stroke="#2d3035" stroke-width="0.7"/></svg>
<svg class="r" style="left:7px;top:359px;" width="16" height="16" viewBox="0 0 16 16"><path d="M9.6 12.6v2.8H0.8V4.6h2.6" fill="none" stroke="#d2d4d8" stroke-width="1.14" stroke-linejoin="round"/><circle cx="9.4" cy="6.6" r="6" fill="none" stroke="#d2d4d8" stroke-width="1.14" stroke-linejoin="round"/><path d="M3.6 4.8h8.2v3.4a6 6 0 0 1-2.4 4.2H3.6z" fill="#3d8ee6"/></svg>
<svg class="r" style="left:7px;top:380.5px;" width="16" height="16" viewBox="0 0 16 16"><path d="M9.6 12.6v2.8H0.8V4.6h2.6" fill="none" stroke="#d2d4d8" stroke-width="1.14" stroke-linejoin="round"/><circle cx="9.4" cy="6.6" r="6" fill="none" stroke="#d2d4d8" stroke-width="1.14" stroke-linejoin="round"/><path d="M3.8 4.8h7.8v3.4a6 6 0 0 1-2.4 4H3.8z" fill="none" stroke="#3d8ee6" stroke-width="1.23" stroke-linejoin="round"/><path d="M16 16h-3l3-3z" fill="#d2d4d8"/></svg>
<svg class="r" style="left:7px;top:402px;" width="16" height="16" viewBox="0 0 16 16"><path d="M1.6 4.4L8 1l7 1.8L9 5.4z" fill="none" stroke="#d2d4d8" stroke-width="1.06" stroke-linejoin="round"/><path d="M3.4 5v4.6M1.6 8l1.8 2l1.8-2M12.4 5.4V10M10.6 8.4l1.8 2l1.8-2" fill="none" stroke="#3d8ee6" stroke-width="1.14" stroke-linejoin="round"/><path d="M0.6 13c2.6-3.6 4.4-2 6.6 0.2s4.4 2.2 8-1.6v3.2c-3.4 2.4-5.6 1.8-7.8-0.2s-4-2.6-6.8 0.6z" fill="#3d8ee6"/></svg>
<svg class="r" style="left:7px;top:424.5px;" width="16" height="16" viewBox="0 0 16 16"><path d="M3.6 7.4a3.4 3.4 0 1 1 6-2.6c0.6 1.6 1.4 2.2 3 2.4a2.6 2.6 0 0 1 2 3.4l-1.4 2.8H4.8l0.2-3.4C3.8 9.4 3.4 8.6 3.6 7.4z" fill="none" stroke="#d2d4d8" stroke-width="1.14" stroke-linejoin="round"/></svg>
<svg class="r" style="left:7px;top:445px;" width="16" height="16" viewBox="0 0 16 16"><path d="M2 1.6h12.4v12.4H2z" stroke="#d2d4d8" stroke-width="1.3" fill="none" stroke-dasharray="1.6 1.3"/><path d="M1.6 9.4V2h11.8v7.4" fill="none" stroke="#d2d4d8" stroke-width="0.0" stroke-linejoin="round"/><path d="M4.6 4.4h7.2v7H4.6z" fill="#2d3035"/><path d="M4.6 11.4V4.4h7.2" fill="none" stroke="#d2d4d8" stroke-width="1.23" stroke-linejoin="round"/><path d="M1 15l4-4M4.6 15l3.6-3.6M8 15l3.6-3.6M11.6 15l2.8-2.8" fill="none" stroke="#d2d4d8" stroke-width="0.79" stroke-linejoin="round"/></svg>
<div class="r" style="left:6px;top:466.5px;width:18px;height:1px;background:#63666b;"></div>
<svg class="r" style="left:7px;top:474px;" width="16" height="16" viewBox="0 0 16 16"><path d="M4.6 11.6a3 3 0 0 1-1.8-5.4a3 3 0 0 1 4-3.6a3.2 3.2 0 0 1 5.2 0.8a3 3 0 0 1 1.6 5a3 3 0 0 1-3 3.6a2.8 2.8 0 0 1-3.6 1a2.6 2.6 0 0 1-2.4-1.4z" fill="none" stroke="#d2d4d8" stroke-width="1.14" stroke-linejoin="round"/></svg>
<svg class="r" style="left:7px;top:495px;" width="16" height="16" viewBox="0 0 16 16"><path d="M0.8 0.8h14.4v14.4H0.8z" fill="none" stroke="#d2d4d8" stroke-width="1.14" stroke-linejoin="round"/><path d="M0.8 0.8h14.4v3.4H0.8z" fill="#d2d4d8"/><path d="M5.6 4v11M10.4 4v11M1 7.8h14M1 11.4h14" fill="none" stroke="#d2d4d8" stroke-width="1.06" stroke-linejoin="round"/></svg>
<svg class="r" style="left:7px;top:517px;" width="16" height="16" viewBox="0 0 16 16"><path d="M1.4 1h13.2M8 1v14.4" fill="none" stroke="#d2d4d8" stroke-width="1.32" stroke-linejoin="round"/></svg>
<svg class="r" style="left:7px;top:538px;" width="16" height="16" viewBox="0 0 16 16"><path d="M3 1h8M7 1v9.4M1 10.4h14M1 13.8h14" fill="none" stroke="#d2d4d8" stroke-width="1.14" stroke-linejoin="round"/><path d="M7 10.4h8" fill="none" stroke="#d2d4d8" stroke-width="1.14" stroke-linejoin="round"/></svg>
<div class="r" style="left:6px;top:568px;width:2px;height:2px;background:#ececec;box-shadow:1px 1px 0 #15171a;"></div><div class="r" style="left:10px;top:568px;width:2px;height:2px;background:#ececec;box-shadow:1px 1px 0 #15171a;"></div><div class="r" style="left:14px;top:568px;width:2px;height:2px;background:#ececec;box-shadow:1px 1px 0 #15171a;"></div><div class="r" style="left:18px;top:568px;width:2px;height:2px;background:#ececec;box-shadow:1px 1px 0 #15171a;"></div>
<svg class="r" style="left:6px;top:582px;" width="17" height="17" viewBox="0 0 16 16"><path d="M9.4 3.4V0.8h5.8v5.8h-2.4" fill="none" stroke="#8a8a8a" stroke-width="1.06" stroke-linejoin="round"/><path d="M5.4 6.6V3.6h6.8v6.8H9.8" fill="none" stroke="#b0b0b0" stroke-width="1.06" stroke-linejoin="round"/><path d="M0.8 6.8h8.4v8.4H0.8z" fill="none" stroke="#d2d4d8" stroke-width="1.23" stroke-linejoin="round"/></svg>
<div class="r" style="left:6px;top:604.5px;width:18px;height:1px;background:#63666b;"></div>
<svg class="r" style="left:6px;top:611px;" width="17" height="17" viewBox="0 0 16 16"><path d="M9.4 3.4V0.8h5.8v5.8h-2.4" fill="none" stroke="#8a8a8a" stroke-width="1.06" stroke-linejoin="round"/><path d="M5.4 6.6V3.6h6.8v6.8H9.8" fill="none" stroke="#b0b0b0" stroke-width="1.06" stroke-linejoin="round"/><path d="M0.8 6.8h8.4v8.4H0.8z" fill="none" stroke="#3d8ee6" stroke-width="1.23" stroke-linejoin="round"/></svg>
<svg class="r" style="left:6px;top:633px;" width="17" height="17" viewBox="0 0 16 16"><path d="M6 6V1.2h8.6v8.6H10" fill="none" stroke="#9a9a9a" stroke-width="1.23" stroke-linejoin="round"/><path d="M0.8 6.8h8.4v8.4H0.8z" fill="none" stroke="#3d8ee6" stroke-width="1.23" stroke-linejoin="round"/></svg>
<svg class="r" style="left:6px;top:654.5px;" width="17" height="17" viewBox="0 0 16 16"><path d="M6 6V1.2h8.6v8.6H10" fill="none" stroke="#3d8ee6" stroke-width="1.23" stroke-linejoin="round"/><path d="M0.8 6.8h8.4v8.4H0.8z" fill="none" stroke="#d2d4d8" stroke-width="1.23" stroke-linejoin="round"/></svg>
<div class="r" style="left:6px;top:675.5px;width:18px;height:13.5px;overflow:hidden;"><svg class="r" style="left:0px;top:0px;" width="17" height="17" viewBox="0 0 16 16"><path d="M9.4 3.4V0.8h5.8v5.8h-2.4" fill="none" stroke="#3d8ee6" stroke-width="1.06" stroke-linejoin="round"/><path d="M5.4 6.6V3.6h6.8v6.8H9.8" fill="none" stroke="#b0b0b0" stroke-width="1.06" stroke-linejoin="round"/><path d="M0.8 6.8h8.4v8.4H0.8z" fill="none" stroke="#d2d4d8" stroke-width="1.23" stroke-linejoin="round"/></svg></div>
<svg class="r" style="left:933.5px;top:127.5px;" width="16" height="16" viewBox="0 0 16 16"><path d="M1 7.6h14.4M8.2 0.8v13.6" fill="none" stroke="#3d8ee6" stroke-width="1.06" stroke-linejoin="round"/><path d="M8.2 0.6l7.4 7l-7.4 7l-7.4-7z" fill="none" stroke="#3d8ee6" stroke-width="1.23" stroke-linejoin="round"/></svg>
<svg class="r" style="left:933.5px;top:148px;" width="16" height="16" viewBox="0 0 16 16"><path d="M0.6 1h3.6v3.6H0.6zM5.6 1h3.2v3.6H5.6z" fill="none" stroke="#c0c3c8" stroke-width="0.97" stroke-linejoin="round"/><path d="M9 2.8h1.6v4.4M8.6 5.4l2 2.2l2-2.2" fill="none" stroke="#d2d4d8" stroke-width="1.06" stroke-linejoin="round"/><path d="M7 8.4h4.6V13H7zM10.6 10.6h4.6v4.6h-4.6z" fill="#2d3035" stroke="#3d8ee6" stroke-width="1.3"/></svg>
<svg class="r" style="left:933.5px;top:169.5px;" width="16" height="16" viewBox="0 0 16 16"><path d="M3.6 15V6.4a4.6 4.6 0 0 1 9.2 0" fill="none" stroke="#3d8ee6" stroke-width="1.32" stroke-linejoin="round"/><path d="M6.4 15.2V7a2 2 0 0 1 4 0v6.4M6.4 15h3.4" fill="none" stroke="#d2d4d8" stroke-width="1.06" stroke-linejoin="round"/></svg>
<svg class="r" style="left:933.5px;top:191px;" width="16" height="16" viewBox="0 0 16 16"><path d="M0.8 7.4l7.8-3.6l4 4.4l-5.2 6z" fill="#eaa22f"/><path d="M4 7.4l4-1.8l2.2 2.4l-2.8 2.8z" fill="#2d3035"/><path d="M8.8 4l3.4-3a1.4 1.4 0 0 1 2 0.2l0.6 0.8a1.4 1.4 0 0 1-0.2 1.9L12 6.2" fill="none" stroke="#d2d4d8" stroke-width="1.06" stroke-linejoin="round"/></svg>
<svg class="r" style="left:933.5px;top:212.5px;" width="16" height="16" viewBox="0 0 16 16"><path d="M1 15l1-3.2l6.6-6.6l2.4 2.4l-6.6 6.6z" fill="none" stroke="#d2d4d8" stroke-width="1.06" stroke-linejoin="round"/><path d="M8 3.6l4.2 4.2M9.8 5.2l2.6-3.4a1.6 1.6 0 0 1 2.4 2.2L11.4 6.8" fill="none" stroke="#3d8ee6" stroke-width="1.32" stroke-linejoin="round"/><path d="M10.2 13h5M12.7 10.5v5" fill="none" stroke="#3cb043" stroke-width="1.58" stroke-linejoin="round"/></svg>
<svg class="r" style="left:933.5px;top:234.5px;" width="16" height="16" viewBox="0 0 16 16"><path d="M0.8 0.8h14.6v12.6H0.8z" fill="none" stroke="#3d8ee6" stroke-width="1.23" stroke-linejoin="round"/><path d="M0.8 7h6.8v6.4" fill="none" stroke="#d2d4d8" stroke-width="1.14" stroke-linejoin="round"/><path d="M0.8 13.4V7h6.8v6.4z" fill="none" stroke="#d2d4d8" stroke-width="1.14" stroke-linejoin="round"/><path d="M9.4 6.4l4-4M10.4 2.4h3v3" fill="none" stroke="#d2d4d8" stroke-width="0.97" stroke-linejoin="round"/></svg>
<div class="r" style="left:933px;top:256px;width:18px;height:1px;background:#63666b;"></div>
<svg class="r" style="left:933.5px;top:262.5px;" width="16" height="16" viewBox="0 0 16 16"><path d="M0.6 1h3.6v3.6H0.6zM5.6 1h3.2v3.6H5.6z" fill="none" stroke="#c0c3c8" stroke-width="0.97" stroke-linejoin="round"/><path d="M9 2.8h1.6v4.4M8.6 5.4l2 2.2l2-2.2" fill="none" stroke="#d2d4d8" stroke-width="1.06" stroke-linejoin="round"/><path d="M7 8.4h4.6V13H7zM10.6 10.6h4.6v4.6h-4.6z" fill="#2d3035" stroke="#3d8ee6" stroke-width="1.3"/><path d="M0 14.6l3-4.2l0.2 2.8l2.4-0.2l-3 4.4l-0.2-2.8z" fill="#eaa22f"/></svg>
<svg class="r" style="left:933.5px;top:284.5px;" width="16" height="16" viewBox="0 0 16 16"><path d="M0.8 8.6h9M6.6 1.4v13.6" fill="none" stroke="#3d8ee6" stroke-width="1.14" stroke-linejoin="round"/><path d="M6.6 0.8L0.8 8.6L6.6 8.6M6.6 0.8l5 6" fill="none" stroke="#3d8ee6" stroke-width="1.14" stroke-linejoin="round"/><path d="M9.6 13l3.2-4.4l0.2 3l2.6-0.2l-3.2 4.6l-0.2-3z" fill="#eaa22f"/></svg>
<div class="r" style="left:933px;top:305.5px;width:18px;height:1px;background:#63666b;"></div>
<svg class="r" style="left:933.5px;top:313.5px;" width="16" height="16" viewBox="0 0 16 16"><path d="M9.4 1.4A6.8 6.8 0 1 1 3 4.4" fill="none" stroke="#3d8ee6" stroke-width="1.32" stroke-linejoin="round"/><path d="M6.2 2.4l3.6-1.2l0.4 3.8" fill="none" stroke="#3d8ee6" stroke-width="1.23" stroke-linejoin="round"/><path d="M6.4 7.2h3v3h-3z" fill="none" stroke="#d2d4d8" stroke-width="0.97" stroke-linejoin="round"/></svg>
<svg class="r" style="left:933.5px;top:335px;" width="16" height="16" viewBox="0 0 16 16"><path d="M7.4 0.4v15.2" fill="none" stroke="#d2d4d8" stroke-width="1.14" stroke-linejoin="round"/><path d="M7.4 2.6a5.4 5.4 0 1 0 0 10.8c3.4 0 6-2 6.6-5.4" fill="none" stroke="#3d8ee6" stroke-width="1.32" stroke-linejoin="round"/><path d="M11.4 8.6l2.8-1.4l1.4 2.8" fill="none" stroke="#3d8ee6" stroke-width="1.14" stroke-linejoin="round"/></svg>
<div class="r" style="left:933px;top:357px;width:18px;height:1px;background:#63666b;"></div>
<svg class="r" style="left:933.5px;top:365px;" width="16" height="16" viewBox="0 0 16 16"><path d="M8 0.4v15.6" fill="none" stroke="#d2d4d8" stroke-width="1.06" stroke-linejoin="round"/><path d="M5.8 3.6V13.6H1z" fill="none" stroke="#d2d4d8" stroke-width="1.06" stroke-linejoin="round"/><path d="M10.2 3.6V13.6H15z" fill="none" stroke="#3d8ee6" stroke-width="1.14" stroke-linejoin="round"/></svg>
<svg class="r" style="left:933.5px;top:386.5px;" width="16" height="16" viewBox="0 0 16 16"><path d="M5.4 2.4V12.4H0.8z" fill="none" stroke="#d2d4d8" stroke-width="0.97" stroke-linejoin="round"/><path d="M3 15.4L13.4 2" fill="none" stroke="#d2d4d8" stroke-width="0.97" stroke-linejoin="round"/><path d="M7 3.4l6.8 8.2l-3.4 3l-3.6-5z" fill="none" stroke="#3d8ee6" stroke-width="1.14" stroke-linejoin="round"/><path d="M7 3.4l-1 7.2" fill="none" stroke="#d2d4d8" stroke-width="0.88" stroke-linejoin="round"/></svg>
<div class="r" style="left:933px;top:408px;width:18px;height:1px;background:#63666b;"></div>
<svg class="r" style="left:933.5px;top:415px;" width="16" height="16" viewBox="0 0 16 16"><path d="M1 1h5.4v5.4H1zM9.4 1h5.4v5.4H9.4zM1 9.4h5.4v5.4H1zM9.4 9.4h5.4v5.4H9.4z" fill="none" stroke="#3d8ee6" stroke-width="1.23" stroke-linejoin="round"/><path d="M16.6 16.6h-3l3-3z" fill="#d2d4d8"/></svg>
<div class="r" style="left:933px;top:437px;width:18px;height:1px;background:#63666b;"></div>
<svg class="r" style="left:933.5px;top:444.5px;" width="16" height="16" viewBox="0 0 16 16"><path d="M9.2 1.2L6.4 4l2.8 2.4M6.8 4h5.8v4" fill="none" stroke="#d2d4d8" stroke-width="0.97" stroke-linejoin="round"/><path d="M0.8 6.4h6v5.4h-6z" fill="none" stroke="#d2d4d8" stroke-width="1.14" stroke-linejoin="round"/><path d="M7.4 6.2h6v5.6h-6z" fill="none" stroke="#3d8ee6" stroke-width="1.23" stroke-linejoin="round"/><path d="M9 12.4l3 3l3.4-3.4V7" fill="none" stroke="#7a7d82" stroke-width="0.88" stroke-linejoin="round"/></svg>
<svg class="r" style="left:933.5px;top:467px;" width="16" height="16" viewBox="0 0 16 16"><path d="M1.6 0.4v15.2" fill="none" stroke="#d2d4d8" stroke-width="1.14" stroke-linejoin="round"/><path d="M4.6 2.6h5.8v2.6H4.6zM4.6 7h10v2.6h-10zM4.6 11.2h7.6v2.6H4.6z" fill="none" stroke="#3d8ee6" stroke-width="1.06" stroke-linejoin="round"/></svg>
<div class="r" style="left:933px;top:488.5px;width:18px;height:1px;background:#63666b;"></div>
<svg class="r" style="left:933.5px;top:495.5px;" width="16" height="16" viewBox="0 0 16 16"><path d="M0.8 3.6h7v8.8h-7z" fill="none" stroke="#3d8ee6" stroke-width="1.32" stroke-linejoin="round"/><path d="M7.8 3.6h7.2v8.8H7.8" fill="none" stroke="#d2d4d8" stroke-width="1.06" stroke-linejoin="round"/><path d="M7.8 0.2v15.8" fill="none" stroke="#d2d4d8" stroke-width="1.14" stroke-linejoin="round"/></svg>
<svg class="r" style="left:933.5px;top:517px;" width="16" height="16" viewBox="0 0 16 16"><path d="M0.6 8.2h7" fill="none" stroke="#3d8ee6" stroke-width="1.32" stroke-linejoin="round"/><path d="M9.2 8.2h2.4" fill="none" stroke="#8a8d92" stroke-width="1.06" stroke-linejoin="round"/><path d="M9.4 15.4L15 0.8" fill="none" stroke="#d2d4d8" stroke-width="1.14" stroke-linejoin="round"/></svg>
<svg class="r" style="left:933.5px;top:540px;" width="16" height="16" viewBox="0 0 16 16"><path d="M5.4 2.4H0.8v10h14.4v-10h-4.4" fill="none" stroke="#d2d4d8" stroke-width="1.23" stroke-linejoin="round"/><path d="M5.4 0.6v4M10.8 0.6v4" fill="none" stroke="#3d8ee6" stroke-width="1.14" stroke-linejoin="round"/></svg>
<svg class="r" style="left:933.5px;top:559px;" width="16" height="16" viewBox="0 0 16 16"><path d="M0.6 0.8h5M0.6 0.8v5" fill="none" stroke="#3d8ee6" stroke-width="1.14" stroke-linejoin="round"/><path d="M1.6 1.8l4.6 4.6M6.4 3v3.6H2.8" fill="none" stroke="#d2d4d8" stroke-width="0.97" stroke-linejoin="round"/><path d="M8 14.4V10a2 2 0 0 1 2-2h3.6" fill="none" stroke="#3d8ee6" stroke-width="1.14" stroke-linejoin="round"/><circle cx="14" cy="7.8" r="1.6" fill="#3d8ee6"/><circle cx="8" cy="14.4" r="1.4" fill="#2d3035" stroke="#3d8ee6" stroke-width="1.1"/></svg>
<svg class="r" style="left:933.5px;top:581.5px;" width="16" height="16" viewBox="0 0 16 16"><path d="M0.6 8h8" fill="none" stroke="#d2d4d8" stroke-width="1.23" stroke-linejoin="round"/><path d="M9.4 8h3" stroke="#3d8ee6" stroke-width="1.2" stroke-dasharray="1 0.8"/><path d="M12.8 6.6h2.6v2.8h-2.6z" fill="none" stroke="#3d8ee6" stroke-width="0.97" stroke-linejoin="round"/></svg>
<svg class="r" style="left:933.5px;top:602.5px;" width="16" height="16" viewBox="0 0 16 16"><path d="M9 0.8H0.8v14H9" fill="none" stroke="#d2d4d8" stroke-width="1.23" stroke-linejoin="round"/><path d="M9 0.8h1.6l5 14H9" fill="none" stroke="#3d8ee6" stroke-width="1.32" stroke-linejoin="round"/><path d="M9 1.4v13" stroke="#3d8ee6" stroke-width="1" stroke-dasharray="1 1"/></svg>
<div class="r" style="left:933px;top:624.5px;width:18px;height:1px;background:#63666b;"></div>
<svg class="r" style="left:933.5px;top:631.5px;" width="16" height="16" viewBox="0 0 16 16"><path d="M0.8 11.2L10 2" fill="none" stroke="#3d8ee6" stroke-width="1.41" stroke-linejoin="round"/><path d="M0.8 12v3.4M10.6 1.4h4.8" fill="none" stroke="#9a9da2" stroke-width="1.06" stroke-linejoin="round"/></svg>
<svg class="r" style="left:933.5px;top:653px;" width="16" height="16" viewBox="0 0 16 16"><path d="M0.8 11.4A10 10 0 0 1 10.4 1.4" fill="none" stroke="#3d8ee6" stroke-width="1.41" stroke-linejoin="round"/><path d="M0.8 12.2v3.4M10.8 1.4h4.6" fill="none" stroke="#9a9da2" stroke-width="1.06" stroke-linejoin="round"/></svg>
<div class="r" style="left:933px;top:675px;width:18px;height:1px;background:#63666b;"></div>
<div class="r" style="left:933px;top:682px;width:18px;height:7px;overflow:hidden;"><svg class="r" style="left:0px;top:0px;" width="16" height="16" viewBox="0 0 16 16"><path d="M2 8.6l4 3l6-7" fill="none" stroke="#b0b0b0" stroke-width="1.14" stroke-linejoin="round"/><path d="M9.4 4.4l3-2.6l2.6 2.8l-3 2.6z" fill="#3d8ee6"/><path d="M11 0.6l4 4" fill="none" stroke="#d2d4d8" stroke-width="0.88" stroke-linejoin="round"/></svg></div>
<div class="r" style="left:957px;top:110px;width:1px;height:579px;background:#24262a;"></div>
<div class="r" style="left:961px;top:118px;width:319px;height:19.5px;background:#202226;"></div>
<div class="r" style="left:961px;top:137px;width:319px;height:1px;background:#8e8e8e;"></div>
<svg class="r" style="left:0;top:0" width="1280" height="140" viewBox="0 0 1280 140"><defs><clipPath id="tc"><rect x="961" y="118" width="319" height="20"/></clipPath></defs><g clip-path="url(#tc)"><path d="M991.5 137.5 L1005.3 123.6 Q1008.3 120.6 1011.8 120.6 H1028.6 Q1031.8 120.6 1031.8 123.8 V137.5" fill="#202226" stroke="#8a8a8a" stroke-width="1"/><path d="M1021.8 137.5 L1035.6 123.6 Q1038.6 120.6 1042.1 120.6 H1058.9 Q1062.1 120.6 1062.1 123.8 V137.5" fill="#202226" stroke="#8a8a8a" stroke-width="1"/><path d="M1052.0 137.5 L1065.8 123.6 Q1068.8 120.6 1072.3 120.6 H1089.1 Q1092.3 120.6 1092.3 123.8 V137.5" fill="#202226" stroke="#8a8a8a" stroke-width="1"/><path d="M1082.3 137.5 L1096.1 123.6 Q1099.1 120.6 1102.6 120.6 H1119.4 Q1122.6 120.6 1122.6 123.8 V137.5" fill="#202226" stroke="#8a8a8a" stroke-width="1"/><path d="M1112.6 137.5 L1126.4 123.6 Q1129.4 120.6 1132.9 120.6 H1149.7 Q1152.9 120.6 1152.9 123.8 V137.5" fill="#202226" stroke="#8a8a8a" stroke-width="1"/><path d="M1142.9 137.5 L1156.7 123.6 Q1159.7 120.6 1163.2 120.6 H1180.0 Q1183.2 120.6 1183.2 123.8 V137.5" fill="#202226" stroke="#8a8a8a" stroke-width="1"/><path d="M1173.2 137.5 L1187.0 123.6 Q1190.0 120.6 1193.5 120.6 H1210.3 Q1213.5 120.6 1213.5 123.8 V137.5" fill="#202226" stroke="#8a8a8a" stroke-width="1"/><path d="M1203.4 137.5 L1217.2 123.6 Q1220.2 120.6 1223.7 120.6 H1240.5 Q1243.7 120.6 1243.7 123.8 V137.5" fill="#202226" stroke="#8a8a8a" stroke-width="1"/><path d="M961.2 137.5 L975.0 123.6 Q978.0 120.6 981.5 120.6 H998.3 Q1001.5 120.6 1001.5 123.8 V137.5" fill="#3c3f44" stroke="#8a8a8a" stroke-width="1"/></g></svg>
<span class="t" style="left:978.40px;top:124.04px;font-size:12px;line-height:12px;color:#f2f2f2;letter-spacing:-0.501px;">...</span>
<span class="t" style="left:1008.40px;top:124.04px;font-size:12px;line-height:12px;color:#f2f2f2;letter-spacing:0.508px;">L...</span>
<span class="t" style="left:1038.40px;top:124.04px;font-size:12px;line-height:12px;color:#f2f2f2;letter-spacing:0.298px;">A...</span>
<span class="t" style="left:1068.40px;top:124.04px;font-size:12px;line-height:12px;color:#f2f2f2;letter-spacing:0.065px;">S...</span>
<span class="t" style="left:1098.40px;top:124.04px;font-size:12px;line-height:12px;color:#f2f2f2;letter-spacing:0.480px;">P...</span>
<span class="t" style="left:1128.40px;top:124.04px;font-size:12px;line-height:12px;color:#f2f2f2;letter-spacing:-0.035px;">S...</span>
<span class="t" style="left:1158.40px;top:124.04px;font-size:12px;line-height:12px;color:#f2f2f2;letter-spacing:0.480px;">P...</span>
<span class="t" style="left:1188.40px;top:124.04px;font-size:12px;line-height:12px;color:#f2f2f2;letter-spacing:0.398px;">Br..</span>
<span class="t" style="left:1219.40px;top:124.04px;font-size:12px;line-height:12px;color:#f2f2f2;letter-spacing:-0.056px;">C...</span>
<svg class="r" style="left:988px;top:124px;" width="10" height="10" viewBox="0 0 10 10"><path d="M0.8 0.8l8.4 8.4M9.2 0.8L0.8 9.2" fill="none" stroke="#f0f0f0" stroke-width="1.14" stroke-linejoin="round"/></svg>
<svg class="r" style="left:1269.5px;top:125px;" width="9" height="8" viewBox="0 0 9 8"><path d="M0.5 1.3h8" fill="none" stroke="#f0f0f0" stroke-width="1.14" stroke-linejoin="round"/><path d="M0.5 3.6h8l-4 4z" fill="#f0f0f0"/></svg>
<div class="r" style="left:966px;top:143px;width:261px;height:22px;background:#45484d;"></div>
<span class="t" style="left:970.70px;top:148.74px;font-size:12px;line-height:12px;color:#f0f0f0;letter-spacing:-0.013px;">No Selection</span>
<svg class="r" style="left:1215.5px;top:153.4px;" width="8" height="6" viewBox="0 0 8 6"><path d="M0.5 0.8l3.5 3.4l3.5-3.4" fill="none" stroke="#e0e0e0" stroke-width="1.14" stroke-linejoin="round"/></svg>
<svg class="r" style="left:1235px;top:146px;" width="16" height="15" viewBox="0 0 16 15"><path d="M1 0.8h11.6L8 7v6.6l-2.4-1.2V7z" fill="none" stroke="#b8b8b8" stroke-width="1.06" stroke-linejoin="round"/><path d="M10 11.6l2.8-4l0.2 2.6l2.2-0.2l-2.8 4.2l-0.2-2.6z" fill="#eaa22f"/></svg>
<div class="r" style="left:1254.5px;top:143px;width:22.5px;height:20px;background:#2e4560;border:1px solid #1f5a90;box-sizing:border-box;"></div>
<svg class="r" style="left:1258px;top:147.5px;" width="16" height="11" viewBox="0 0 16 11"><path d="M0.4 5.5C3 1.6 5.4 0.6 8 0.6s5 1 7.6 4.9C13 9.4 10.6 10.4 8 10.4S3 9.4 0.4 5.5z" fill="#fff"/><circle cx="8" cy="5.5" r="3.6" fill="#3d8ee6"/><circle cx="8" cy="5.5" r="1.7" fill="#10141c"/></svg>
<div class="r" style="left:976px;top:170px;width:304px;height:425.5px;background:#2d3035;"></div>
<div class="r" style="left:976px;top:170.0px;width:304px;height:18.5px;background:#3e4146;"></div>
<div class="r" style="left:964px;top:174.5px;width:9.5px;height:9.5px;background:linear-gradient(180deg,#f4f4f4,#c8c8c8);border:1px solid #9a9a9a;box-sizing:border-box;"></div>
<div class="r" style="left:966px;top:178.7px;width:5.5px;height:1.3px;background:#2a3a9a;"></div>
<span class="t" style="left:979.17px;top:173.52px;font-size:12.5px;line-height:12.5px;color:#ffffff;font-weight:bold;letter-spacing:-0.184px;">General</span>
<div class="r" style="left:976px;top:206.0px;width:304px;height:1px;background:#484b50;"></div>
<div class="r" style="left:977px;top:188.5px;width:81.5px;height:17.5px;overflow:hidden;"><span class="t" style="left:3.40px;top:3.94px;font-size:12px;line-height:12px;color:#f0f0f0;letter-spacing:-0.244px;">Color</span></div>
<div class="r" style="left:1065.5px;top:191.0px;width:13.5px;height:13px;background:#fff;border:1px solid #111;box-sizing:border-box;border-radius:1.5px;"></div>
<span class="t" style="left:1084.40px;top:192.44px;font-size:12px;line-height:12px;color:#f0f0f0;letter-spacing:-0.354px;">ByLayer</span>
<div class="r" style="left:976px;top:224.5px;width:304px;height:1px;background:#484b50;"></div>
<div class="r" style="left:977px;top:207.0px;width:81.5px;height:17.5px;overflow:hidden;"><span class="t" style="left:3.40px;top:3.94px;font-size:12px;line-height:12px;color:#f0f0f0;letter-spacing:-0.204px;">Layer</span></div>
<span class="t" style="left:1063.00px;top:210.94px;font-size:12px;line-height:12px;color:#f0f0f0;letter-spacing:1.126px;">0</span>
<div class="r" style="left:976px;top:243.0px;width:304px;height:1px;background:#484b50;"></div>
<div class="r" style="left:977px;top:225.5px;width:81.5px;height:17.5px;overflow:hidden;"><span class="t" style="left:3.40px;top:3.94px;font-size:12px;line-height:12px;color:#f0f0f0;letter-spacing:0.190px;">Linetype</span></div>
<div class="r" style="left:1065.5px;top:234.5px;width:111px;height:1px;background:#e8e8e8;"></div>
<span class="t" style="left:1181.40px;top:229.44px;font-size:12px;line-height:12px;color:#f0f0f0;letter-spacing:-0.187px;">ByLayer</span>
<div class="r" style="left:976px;top:261.5px;width:304px;height:1px;background:#484b50;"></div>
<div class="r" style="left:977px;top:244.0px;width:81.5px;height:17.5px;overflow:hidden;"><span class="t" style="left:3.40px;top:3.94px;font-size:12px;line-height:12px;color:#f0f0f0;letter-spacing:-0.078px;">Linetype scale</span></div>
<span class="t" style="left:1063.00px;top:247.94px;font-size:12px;line-height:12px;color:#f0f0f0;letter-spacing:-0.574px;">1</span>
<div class="r" style="left:976px;top:280.0px;width:304px;height:1px;background:#484b50;"></div>
<div class="r" style="left:977px;top:262.5px;width:81.5px;height:17.5px;overflow:hidden;"><span class="t" style="left:3.40px;top:3.94px;font-size:12px;line-height:12px;color:#f0f0f0;letter-spacing:0.258px;">Lineweight</span></div>
<div class="r" style="left:1065.5px;top:271.5px;width:111px;height:1px;background:#e8e8e8;"></div>
<span class="t" style="left:1180.40px;top:266.44px;font-size:12px;line-height:12px;color:#f0f0f0;letter-spacing:-0.187px;">ByLayer</span>
<div class="r" style="left:976px;top:298.5px;width:304px;height:1px;background:#484b50;"></div>
<div class="r" style="left:977px;top:281.0px;width:81.5px;height:17.5px;overflow:hidden;"><span class="t" style="left:4.40px;top:3.94px;font-size:12px;line-height:12px;color:#f0f0f0;letter-spacing:-0.156px;">Transparency</span></div>
<span class="t" style="left:1063.00px;top:284.94px;font-size:12px;line-height:12px;color:#f0f0f0;letter-spacing:-0.304px;">ByLayer</span>
<div class="r" style="left:976px;top:317.0px;width:304px;height:1px;background:#484b50;"></div>
<div class="r" style="left:977px;top:299.5px;width:81.5px;height:17.5px;overflow:hidden;"><span class="t" style="left:3.40px;top:3.94px;font-size:12px;line-height:12px;color:#f0f0f0;letter-spacing:-0.146px;">Elevation</span></div>
<span class="t" style="left:1063.00px;top:303.44px;font-size:12px;line-height:12px;color:#f0f0f0;letter-spacing:0.948px;">0 m</span>
<div class="r" style="left:976px;top:318.0px;width:304px;height:18.5px;background:#3e4146;"></div>
<div class="r" style="left:964px;top:322.5px;width:9.5px;height:9.5px;background:linear-gradient(180deg,#f4f4f4,#c8c8c8);border:1px solid #9a9a9a;box-sizing:border-box;"></div>
<div class="r" style="left:966px;top:326.7px;width:5.5px;height:1.3px;background:#2a3a9a;"></div>
<span class="t" style="left:979.38px;top:321.52px;font-size:12.5px;line-height:12.5px;color:#ffffff;font-weight:bold;letter-spacing:0.330px;">View</span>
<div class="r" style="left:976px;top:354.0px;width:304px;height:1px;background:#484b50;"></div>
<div class="r" style="left:977px;top:336.5px;width:81.5px;height:17.5px;overflow:hidden;"><span class="t" style="left:3.40px;top:3.94px;font-size:12px;line-height:12px;color:#f0f0f0;letter-spacing:-0.596px;">Camera</span></div>
<div class="r" style="left:964px;top:341.0px;width:9.5px;height:9.5px;background:linear-gradient(180deg,#f4f4f4,#c8c8c8);border:1px solid #9a9a9a;box-sizing:border-box;"></div>
<div class="r" style="left:966px;top:345.2px;width:5.5px;height:1.3px;background:#2a3a9a;"></div>
<div class="r" style="left:968.1px;top:343.0px;width:1.3px;height:5.5px;background:#2a3a9a;"></div>
<span class="t" style="left:1063.00px;top:340.44px;font-size:12px;line-height:12px;color:#f0f0f0;letter-spacing:0.352px;">7.06, 100.46, -13.35</span>
<div class="r" style="left:976px;top:372.5px;width:304px;height:1px;background:#484b50;"></div>
<div class="r" style="left:977px;top:355.0px;width:81.5px;height:17.5px;overflow:hidden;"><span class="t" style="left:4.40px;top:3.94px;font-size:12px;line-height:12px;color:#f0f0f0;letter-spacing:0.570px;">Target</span></div>
<div class="r" style="left:964px;top:359.5px;width:9.5px;height:9.5px;background:linear-gradient(180deg,#f4f4f4,#c8c8c8);border:1px solid #9a9a9a;box-sizing:border-box;"></div>
<div class="r" style="left:966px;top:363.7px;width:5.5px;height:1.3px;background:#2a3a9a;"></div>
<div class="r" style="left:968.1px;top:361.5px;width:1.3px;height:5.5px;background:#2a3a9a;"></div>
<span class="t" style="left:1063.00px;top:358.94px;font-size:12px;line-height:12px;color:#f0f0f0;letter-spacing:0.381px;">6.06, 99.46, -14.35</span>
<div class="r" style="left:976px;top:391.0px;width:304px;height:1px;background:#484b50;"></div>
<div class="r" style="left:977px;top:373.5px;width:81.5px;height:17.5px;overflow:hidden;"><span class="t" style="left:3.40px;top:3.94px;font-size:12px;line-height:12px;color:#f0f0f0;letter-spacing:-0.100px;">Perspective</span></div>
<span class="t" style="left:1063.00px;top:377.44px;font-size:12px;line-height:12px;color:#f0f0f0;letter-spacing:0.607px;">Off</span>
<div class="r" style="left:976px;top:409.5px;width:304px;height:1px;background:#484b50;"></div>
<div class="r" style="left:977px;top:392.0px;width:81.5px;height:17.5px;overflow:hidden;"><span class="t" style="left:3.40px;top:3.94px;font-size:12px;line-height:12px;color:#f0f0f0;letter-spacing:0.065px;">Lens length</span></div>
<span class="t" style="left:1063.00px;top:395.94px;font-size:12px;line-height:12px;color:#f0f0f0;letter-spacing:0.531px;">50 mm</span>
<div class="r" style="left:976px;top:428.0px;width:304px;height:1px;background:#484b50;"></div>
<div class="r" style="left:977px;top:410.5px;width:81.5px;height:17.5px;overflow:hidden;"><span class="t" style="left:3.40px;top:3.94px;font-size:12px;line-height:12px;color:#f0f0f0;letter-spacing:0.001px;">Field of view</span></div>
<span class="t" style="left:1063.00px;top:414.44px;font-size:12px;line-height:12px;color:#f0f0f0;letter-spacing:0.643px;">38.58</span>
<div class="r" style="left:976px;top:446.5px;width:304px;height:1px;background:#484b50;"></div>
<div class="r" style="left:977px;top:429.0px;width:81.5px;height:17.5px;overflow:hidden;"><span class="t" style="left:3.40px;top:3.94px;font-size:12px;line-height:12px;color:#f0f0f0;letter-spacing:0.302px;">Height</span></div>
<span class="t" style="left:1063.00px;top:432.94px;font-size:12px;line-height:12px;color:#8a8d92;letter-spacing:0.467px;">283.81 m</span>
<div class="r" style="left:976px;top:465.0px;width:304px;height:1px;background:#484b50;"></div>
<div class="r" style="left:977px;top:447.5px;width:81.5px;height:17.5px;overflow:hidden;"><span class="t" style="left:3.40px;top:3.94px;font-size:12px;line-height:12px;color:#f0f0f0;letter-spacing:0.507px;">Width</span></div>
<span class="t" style="left:1063.00px;top:451.44px;font-size:12px;line-height:12px;color:#8a8d92;letter-spacing:0.467px;">548.58 m</span>
<div class="r" style="left:976px;top:483.5px;width:304px;height:1px;background:#484b50;"></div>
<div class="r" style="left:977px;top:466.0px;width:81.5px;height:17.5px;overflow:hidden;"><span class="t" style="left:3.40px;top:3.94px;font-size:12px;line-height:12px;color:#f0f0f0;letter-spacing:-0.380px;">Clipping</span></div>
<span class="t" style="left:1063.00px;top:469.94px;font-size:12px;line-height:12px;color:#f0f0f0;letter-spacing:0.607px;">Off</span>
<div class="r" style="left:976px;top:502.0px;width:304px;height:1px;background:#484b50;"></div>
<div class="r" style="left:977px;top:484.5px;width:81.5px;height:17.5px;overflow:hidden;"><span class="t" style="left:3.40px;top:3.94px;font-size:12px;line-height:12px;color:#f0f0f0;letter-spacing:-0.000px;">Front plane</span></div>
<span class="t" style="left:1063.00px;top:488.44px;font-size:12px;line-height:12px;color:#f0f0f0;letter-spacing:0.948px;">0 m</span>
<div class="r" style="left:976px;top:520.5px;width:304px;height:1px;background:#484b50;"></div>
<div class="r" style="left:977px;top:503.0px;width:81.5px;height:17.5px;overflow:hidden;"><span class="t" style="left:3.40px;top:3.94px;font-size:12px;line-height:12px;color:#f0f0f0;letter-spacing:-0.241px;">Back plane</span></div>
<span class="t" style="left:1063.00px;top:506.94px;font-size:12px;line-height:12px;color:#f0f0f0;letter-spacing:0.948px;">0 m</span>
<div class="r" style="left:976px;top:539.0px;width:304px;height:1px;background:#484b50;"></div>
<div class="r" style="left:977px;top:521.5px;width:81.5px;height:17.5px;overflow:hidden;"><span class="t" style="left:3.40px;top:3.94px;font-size:12px;line-height:12px;color:#f0f0f0;letter-spacing:-0.207px;">Visual style</span></div>
<span class="t" style="left:1063.00px;top:525.44px;font-size:12px;line-height:12px;color:#f0f0f0;letter-spacing:-0.128px;">Modeling</span>
<div class="r" style="left:976px;top:540.0px;width:304px;height:18.5px;background:#3e4146;"></div>
<div class="r" style="left:964px;top:544.5px;width:9.5px;height:9.5px;background:linear-gradient(180deg,#f4f4f4,#c8c8c8);border:1px solid #9a9a9a;box-sizing:border-box;"></div>
<div class="r" style="left:966px;top:548.7px;width:5.5px;height:1.3px;background:#2a3a9a;"></div>
<span class="t" style="left:979.38px;top:543.52px;font-size:12.5px;line-height:12.5px;color:#ffffff;font-weight:bold;letter-spacing:-0.346px;">Misc</span>
<div class="r" style="left:976px;top:576.0px;width:304px;height:1px;background:#484b50;"></div>
<div class="r" style="left:977px;top:558.5px;width:81.5px;height:17.5px;overflow:hidden;"><span class="t" style="left:3.40px;top:3.94px;font-size:12px;line-height:12px;color:#f0f0f0;letter-spacing:-0.002px;">Annotation scale</span></div>
<span class="t" style="left:1063.00px;top:562.44px;font-size:12px;line-height:12px;color:#f0f0f0;letter-spacing:0.159px;">1:1</span>
<div class="r" style="left:976px;top:594.5px;width:304px;height:1px;background:#484b50;"></div>
<div class="r" style="left:977px;top:577.0px;width:81.5px;height:17.5px;overflow:hidden;"><span class="t" style="left:3.40px;top:3.94px;font-size:12px;line-height:12px;color:#f0f0f0;letter-spacing:0.041px;">Default lighting</span></div>
<span class="t" style="left:1063.00px;top:580.94px;font-size:12px;line-height:12px;color:#f0f0f0;letter-spacing:0.607px;">Off</span>
<div class="r" style="left:1058.5px;top:188.5px;width:1px;height:129.5px;background:#484b50;"></div>
<div class="r" style="left:1058.5px;top:336.5px;width:1px;height:203.5px;background:#484b50;"></div>
<div class="r" style="left:1058.5px;top:558.5px;width:1px;height:37.0px;background:#484b50;"></div>
<div class="r" style="left:976px;top:170px;width:1px;height:425.5px;background:#484b50;"></div>
<div class="r" style="left:29px;top:593px;width:900px;height:2px;background:#25272b;"></div>
<svg class="r" style="left:30.5px;top:600px;" width="5" height="5" viewBox="0 0 5 5"><path d="M0.4 0.4l4.2 4.2M4.6 0.4L0.4 4.6" fill="none" stroke="#d8d8d8" stroke-width="1.14" stroke-linejoin="round"/></svg>
<div class="r" style="left:33px;top:630px;width:2px;height:2px;background:#e4e4e4;box-shadow:1px 1px 0 #17191c;"></div><div class="r" style="left:33px;top:634px;width:2px;height:2px;background:#e4e4e4;box-shadow:1px 1px 0 #17191c;"></div><div class="r" style="left:33px;top:638px;width:2px;height:2px;background:#e4e4e4;box-shadow:1px 1px 0 #17191c;"></div><div class="r" style="left:33px;top:642px;width:2px;height:2px;background:#e4e4e4;box-shadow:1px 1px 0 #17191c;"></div>
<div class="r" style="left:37px;top:595px;width:875px;height:75px;background:#838383;"></div>
<div class="r" style="left:911px;top:595px;width:1px;height:75px;background:#a0a0a0;"></div>
<div class="r" style="left:912px;top:595px;width:16.5px;height:75px;background:#f0f0f0;"></div>
<div class="r" style="left:914px;top:637px;width:14.5px;height:15.5px;background:#cdcdcd;"></div>
<svg class="r" style="left:916px;top:600px;" width="9" height="6" viewBox="0 0 9 6"><path d="M0.8 5.2L4.5 1.4L8.2 5.2" fill="none" stroke="#444" stroke-width="1.41" stroke-linejoin="round"/></svg>
<svg class="r" style="left:916px;top:658px;" width="9" height="6" viewBox="0 0 9 6"><path d="M0.8 0.8L4.5 4.6L8.2 0.8" fill="none" stroke="#444" stroke-width="1.41" stroke-linejoin="round"/></svg>
<div class="r" style="left:44.4px;top:610px;width:2px;height:2px;background:#fff4e4;"></div>
<div class="r" style="left:44.4px;top:614px;width:2px;height:2px;background:#fff4e4;"></div>
<div class="r" style="left:44.4px;top:624.5px;width:2px;height:2px;background:#fff4e4;"></div>
<div class="r" style="left:44.4px;top:628.5px;width:2px;height:2px;background:#fff4e4;"></div>
<div class="r" style="left:44.4px;top:639px;width:2px;height:2px;background:#fff4e4;"></div>
<div class="r" style="left:44.4px;top:643px;width:2px;height:2px;background:#fff4e4;"></div>
<div class="r" style="left:44.4px;top:653.5px;width:2px;height:2px;background:#fff4e4;"></div>
<div class="r" style="left:44.4px;top:657.5px;width:2px;height:2px;background:#fff4e4;"></div>
<div class="r" style="left:37px;top:670px;width:892px;height:19px;background:#33363b;"></div>
<div class="r" style="left:40.3px;top:678.2px;width:1.6px;height:1.6px;background:#fff0dc;"></div>
<div class="r" style="left:40.3px;top:682px;width:1.6px;height:1.6px;background:#fff0dc;"></div>
<span class="t" style="left:51.22px;top:673.96px;font-size:11.5px;line-height:11.5px;color:#e4e4e4;font-family:'Liberation Mono',monospace;font-style:italic;letter-spacing:0.011px;">Enter command</span>
<div class="r" style="left:0px;top:689.5px;width:1280px;height:28.5px;background:#1b1c1f;"></div>
<div class="r" style="left:0px;top:689.5px;width:1.4px;height:28.5px;background:#16688c;"></div>
<svg class="r" style="left:12px;top:699px;" width="12" height="10" viewBox="0 0 12 10"><path d="M0 0.8h12M0 5h12M0 9.2h12" fill="none" stroke="#6a6d72" stroke-width="0.97" stroke-linejoin="round"/></svg>
<div class="r" style="left:29.5px;top:692px;width:73.5px;height:26px;background:#2d3035;border-right:1px solid #25272b;box-sizing:border-box;"></div>
<svg class="r" style="left:41px;top:698px;" width="14" height="13" viewBox="0 0 14 13"><path d="M0.6 0.6h12.8v11.8H0.6z" fill="none" stroke="#e0e0e0" stroke-width="1.06" stroke-linejoin="round"/><path d="M3 3v6.4h6.6" fill="none" stroke="#b0b0b0" stroke-width="0.79" stroke-linejoin="round"/><path d="M10 8.4l1.6 1M2.4 9.4h1.2" fill="none" stroke="#b0b0b0" stroke-width="0.7" stroke-linejoin="round"/></svg>
<span class="t" style="left:60.20px;top:700.04px;font-size:12px;line-height:12px;color:#ffffff;letter-spacing:-0.571px;">Model</span>
<span class="t" style="left:106.90px;top:700.04px;font-size:12px;line-height:12px;color:#ececec;letter-spacing:-0.667px;">Layout1</span>
<div class="r" style="left:151px;top:693px;width:1px;height:24px;background:#4a4d52;"></div>
<span class="t" style="left:156.40px;top:700.04px;font-size:12px;line-height:12px;color:#ececec;letter-spacing:-0.451px;">Layout2</span>
<svg class="r" style="left:207.5px;top:697.5px;" width="13" height="13" viewBox="0 0 13 13"><path d="M6.5 0v13M0 6.5h13" fill="none" stroke="#f0f0f0" stroke-width="0.97" stroke-linejoin="round"/></svg>
<span class="t" style="left:502.85px;top:699.99px;font-size:11px;line-height:11px;color:#ececec;letter-spacing:-0.321px;">400.21, 356.1, 0</span>
<svg class="r" style="left:606.5px;top:697px;" width="17" height="14" viewBox="0 0 17 14"><path d="M0.6 0.6h15.8v12.8H0.6z" fill="none" stroke="#e0e0e0" stroke-width="1.06" stroke-linejoin="round"/><path d="M3 2.6v7.6h6" fill="none" stroke="#b0b0b0" stroke-width="0.79" stroke-linejoin="round"/><path d="M2.4 3h1.4M11 8.6l2 2.4M13 8.6l-2 2.4" fill="none" stroke="#b0b0b0" stroke-width="0.62" stroke-linejoin="round"/></svg>
<span class="t" style="left:626.95px;top:699.99px;font-size:11px;line-height:11px;color:#ececec;letter-spacing:-0.543px;">TILE</span>
<svg class="r" style="left:657.5px;top:697.5px;" width="14" height="14" viewBox="0 0 14 14"><path d="M7 8V1M7 8l-5.6 4.6M7 8l5.6 4.6" fill="none" stroke="#3d8ee6" stroke-width="1.23" stroke-linejoin="round"/><path d="M4.4 3.6L7 0.8l2.6 2.8M0.8 9.2l0.2 3.8l3.8-0.4M13.2 9.2l-0.2 3.8l-3.8-0.4" fill="none" stroke="#3d8ee6" stroke-width="1.14" stroke-linejoin="round"/></svg>
<span class="t" style="left:676.45px;top:699.99px;font-size:11px;line-height:11px;color:#ececec;letter-spacing:-0.596px;">1:1</span>
<svg class="r" style="left:702px;top:697px;" width="13" height="13" viewBox="0 0 13 13"><path d="M2.4 0v13M6.5 0v13M10.6 0v13M0 2.4h13M0 6.5h13M0 10.6h13" fill="none" stroke="#e0e0e0" stroke-width="0.97" stroke-linejoin="round"/></svg>
<span class="t" style="left:720.05px;top:699.99px;font-size:11px;line-height:11px;color:#ececec;letter-spacing:-0.667px;">GRID</span>
<svg class="r" style="left:755.5px;top:697px;" width="13" height="13" viewBox="0 0 13 13"><path d="M2.4 0v13M6.5 0v13M10.6 0v13M0 2.4h13M0 6.5h13M0 10.6h13" fill="none" stroke="#6a6d72" stroke-width="0.97" stroke-linejoin="round"/><path d="M6.5 6.5h4.1v4.1H6.5z" fill="none" stroke="#e04545" stroke-width="1.14" stroke-linejoin="round"/></svg>
<span class="t" style="left:773.85px;top:699.99px;font-size:11px;line-height:11px;color:#ececec;letter-spacing:-0.418px;">SNAP</span>
<svg class="r" style="left:813.5px;top:697px;" width="12" height="13" viewBox="0 0 12 13"><path d="M1 0.6v11.4" fill="none" stroke="#3cb043" stroke-width="1.14" stroke-linejoin="round"/><path d="M1 11.6h10.4" fill="none" stroke="#e04545" stroke-width="1.14" stroke-linejoin="round"/><path d="M1 7h3v4.4" fill="none" stroke="#b0b0b0" stroke-width="0.79" stroke-linejoin="round"/></svg>
<span class="t" style="left:830.95px;top:699.99px;font-size:11px;line-height:11px;color:#ececec;letter-spacing:-0.730px;">ORTHO</span>
<svg class="r" style="left:878px;top:697.5px;" width="14" height="13" viewBox="0 0 14 13"><circle cx="6" cy="7" r="5" fill="none" stroke="#c8c8c8" stroke-width="1.06" stroke-linejoin="round"/><path d="M6 7h7.4M6 7L11.6 1.4" fill="none" stroke="#c8c8c8" stroke-width="0.97" stroke-linejoin="round"/></svg>
<span class="t" style="left:896.45px;top:699.99px;font-size:11px;line-height:11px;color:#ececec;letter-spacing:-0.548px;">POLAR</span>
<div class="r" style="left:937px;top:694px;width:67px;height:20px;background:#2b323c;border:1px solid #2f7fd8;box-sizing:border-box;border-radius:2.5px;"></div>
<div class="r" style="left:1006.5px;top:694px;width:22.5px;height:20px;background:#2b323c;border:1px solid #2f7fd8;box-sizing:border-box;border-radius:2.5px;"></div>
<div class="r" style="left:1032px;top:694px;width:23px;height:20px;background:#2b323c;border:1px solid #2f7fd8;box-sizing:border-box;border-radius:2.5px;"></div>
<div class="r" style="left:1057px;top:694px;width:23px;height:20px;background:#2b323c;border:1px solid #2f7fd8;box-sizing:border-box;border-radius:2.5px;"></div>
<svg class="r" style="left:941.5px;top:697px;" width="14" height="13" viewBox="0 0 14 13"><path d="M1 12L13.4 0.6" fill="none" stroke="#d8d8d8" stroke-width="1.06" stroke-linejoin="round"/><path d="M1 12h12" fill="none" stroke="#e04545" stroke-width="1.14" stroke-linejoin="round"/><circle cx="1.4" cy="12" r="1.3" fill="#e04545"/></svg>
<span class="t" style="left:960.05px;top:699.99px;font-size:11px;line-height:11px;color:#ffffff;letter-spacing:-0.824px;">STRACK</span>
<svg class="r" style="left:1011px;top:697px;" width="14" height="14" viewBox="0 0 14 14"><path d="M1.2 13V6.4a5.8 5.8 0 0 1 11.6 0V13H9.4V6.6a2.4 2.4 0 0 0-4.8 0V13z" fill="none" stroke="#e04545" stroke-width="1.14" stroke-linejoin="round"/><path d="M1.2 10.4h3.4V13H1.2zM9.4 10.4h3.4V13H9.4z" fill="#2b323c" stroke="#e8e8e8" stroke-width="1.1"/></svg>
<svg class="r" style="left:1035.5px;top:697px;" width="16" height="14" viewBox="0 0 16 14"><path d="M0.4 3h5M2.9 0.5v5" fill="none" stroke="#e0e0e0" stroke-width="0.97" stroke-linejoin="round"/><path d="M3.6 8.6h11v4.4h-11z" fill="none" stroke="#e0e0e0" stroke-width="1.14" stroke-linejoin="round"/></svg>
<svg class="r" style="left:1059.5px;top:696.5px;" width="18" height="15" viewBox="0 0 18 15"><path d="M0.4 3h5M2.9 0.5v5" fill="none" stroke="#e0e0e0" stroke-width="0.97" stroke-linejoin="round"/><path d="M5.4 4.4h11.4v9.8H5.4zM5.4 7h11.4" fill="none" stroke="#e0e0e0" stroke-width="1.14" stroke-linejoin="round"/><path d="M8 9h1.8v1.6H8zM12 9h1.8v1.6H12zM8 11.6h1.8v1.4H8zM12 11.6h1.8v1.4H12z" fill="#e0e0e0"/></svg>
<svg class="r" style="left:1088.5px;top:697px;" width="10" height="14" viewBox="0 0 10 14"><path d="M5 0.8a4.2 4.2 0 0 1 2.4 7.6v2h-4.8v-2A4.2 4.2 0 0 1 5 0.8zM3.2 12.6h3.6" fill="none" stroke="#c8c8c8" stroke-width="0.97" stroke-linejoin="round"/><path d="M5 10V6M3.8 5L5 6.2L6.2 5" fill="none" stroke="#c8c8c8" stroke-width="0.7" stroke-linejoin="round"/></svg>
<svg class="r" style="left:1113px;top:697.5px;" width="15" height="13" viewBox="0 0 15 13"><path d="M0.7 0.7h13.6v11.6H0.7zM0.7 3.8h13.6M4.4 3.8v8.4" fill="none" stroke="#e8e8e8" stroke-width="1.14" stroke-linejoin="round"/><path d="M2.2 2.3h1M4.2 2.3h1M6.2 2.3h1" fill="none" stroke="#e8e8e8" stroke-width="0.79" stroke-linejoin="round"/></svg>
<span class="t" style="left:1129.38px;top:698.62px;font-size:12.5px;line-height:12.5px;color:#f4f4f4;letter-spacing:-0.003px;">Drafting</span>
<svg class="r" style="left:1178px;top:701.5px;" width="9" height="6" viewBox="0 0 9 6"><path d="M0.8 0.8l3.6 3.6l3.6-3.6" fill="none" stroke="#7a7d82" stroke-width="1.06" stroke-linejoin="round"/></svg>
<svg class="r" style="left:1204px;top:696.5px;" width="17" height="15" viewBox="0 0 17 15"><path d="M3.6 5V0.8h9.4V5M3.6 11H0.8V5.2h15V11h-2.8M3.6 8.4h9.4v5.8H3.6z" fill="none" stroke="#e8e8e8" stroke-width="1.14" stroke-linejoin="round"/><path d="M4.4 12.4h7.8" fill="none" stroke="#3d8ee6" stroke-width="1.94" stroke-linejoin="round"/></svg>
<svg class="r" style="left:1231.5px;top:697px;" width="12" height="14" viewBox="0 0 12 14"><path d="M1 10.6c1.4-1 1.6-2.4 1.6-5a3.4 3.4 0 0 1 6.8 0c0 2.6 0.2 4 1.6 5zM4.6 12.4a1.5 1.5 0 0 0 2.8 0" fill="none" stroke="#4a4d52" stroke-width="1.06" stroke-linejoin="round"/></svg>
<div class="r" style="left:1261.2px;top:698.2px;width:3.2px;height:3.2px;background:#f0f0f0;border-radius:50%;"></div>
<div class="r" style="left:1261.2px;top:703.4px;width:3.2px;height:3.2px;background:#f0f0f0;border-radius:50%;"></div>
<div class="r" style="left:1261.2px;top:708.6px;width:3.2px;height:3.2px;background:#f0f0f0;border-radius:50%;"></div>
</body></html>
